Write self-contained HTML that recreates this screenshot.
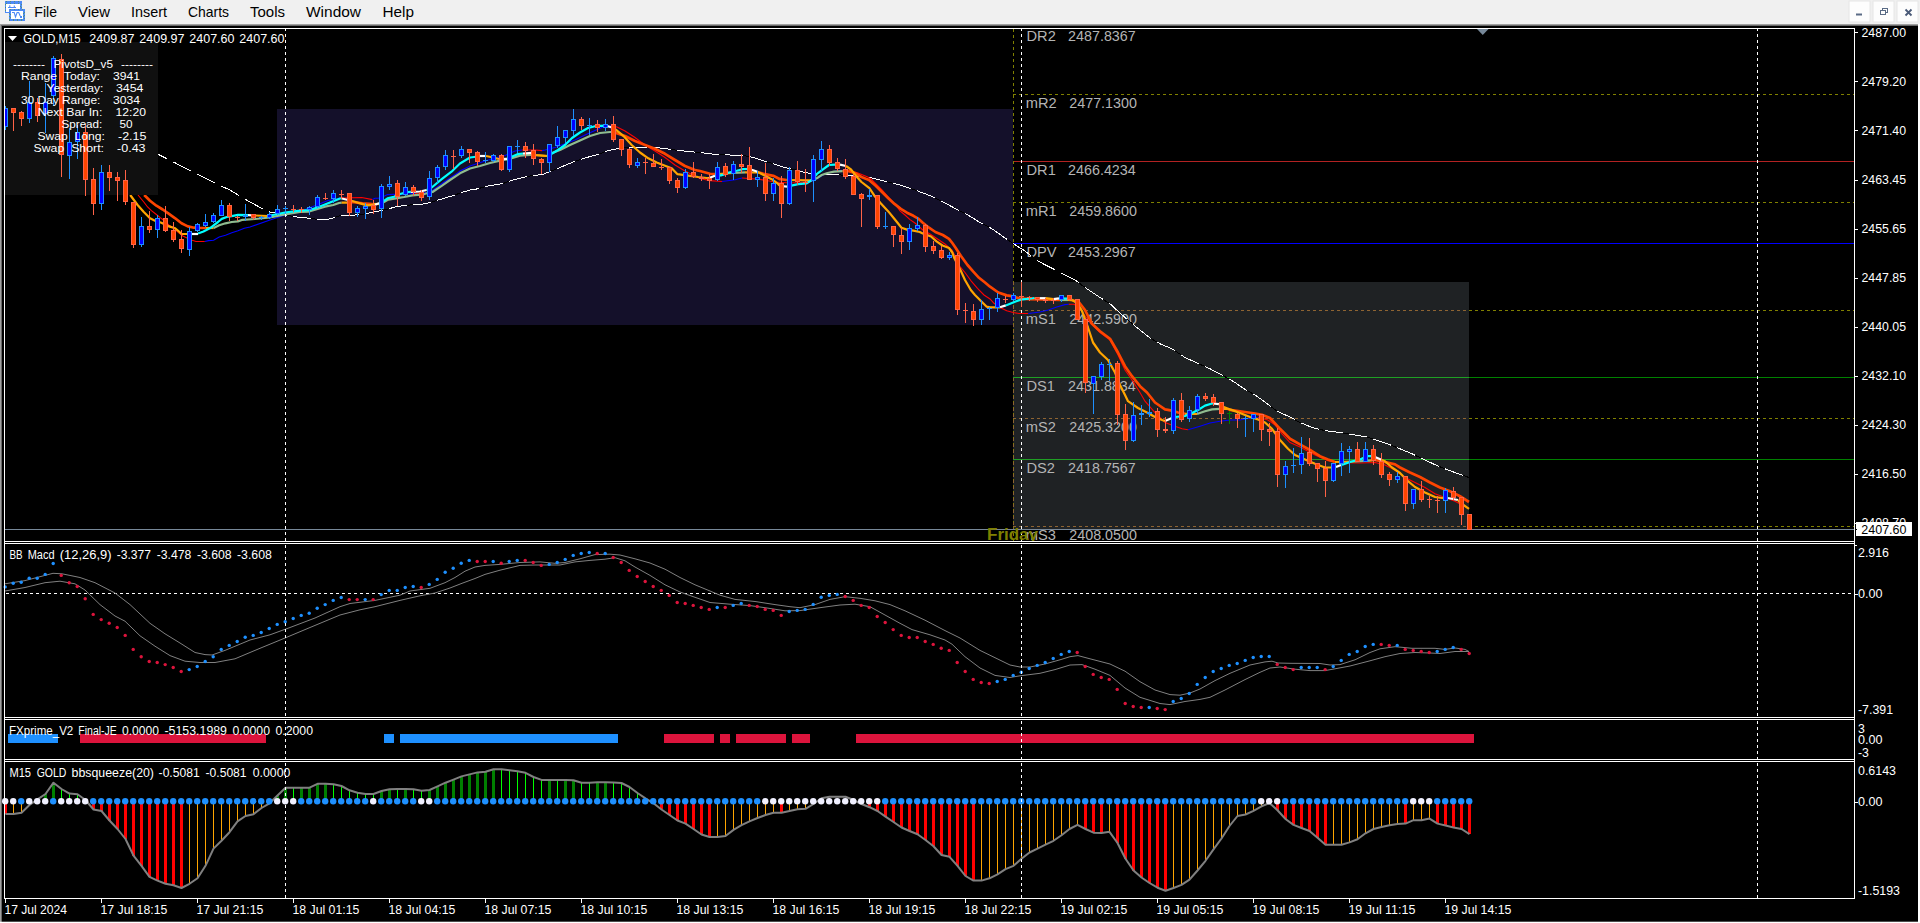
<!DOCTYPE html><html><head><meta charset="utf-8"><title>GOLD,M15</title><style>html,body{margin:0;padding:0;background:#000;overflow:hidden}svg{display:block}text{white-space:pre}</style></head><body><svg width="1920" height="923" viewBox="0 0 1920 923" font-family='"Liberation Sans", sans-serif'>
<defs><clipPath id="cmain"><rect x="5" y="29" width="1849" height="512"/></clipPath><clipPath id="cgrey"><rect x="1013" y="282" width="456" height="248"/></clipPath></defs>
<rect x="0" y="0" width="1920" height="923" fill="#000" />
<rect x="0" y="0" width="1920" height="24" fill="#f0f0f0" />
<g shape-rendering="crispEdges">
<rect x="0" y="24" width="1920" height="1" fill="#a0a0a0" />
<rect x="1" y="25" width="1919" height="1" fill="#696969" />
<rect x="0" y="24" width="1" height="899" fill="#a0a0a0" />
<rect x="1" y="25" width="1" height="898" fill="#696969" />
<rect x="1918" y="24" width="2" height="899" fill="#fff" />
<rect x="0" y="922" width="1920" height="1" fill="#fff" />
</g>
<rect x="0" y="921.7" width="1920" height="0.3" fill="#fff" />
<g shape-rendering="crispEdges"><rect x="5" y="1" width="17" height="12" fill="#4d8af7"/><rect x="6" y="4" width="14" height="8" fill="#fff"/><rect x="9" y="9" width="16" height="12" fill="#4d8af7"/><rect x="11" y="11" width="12" height="8" fill="#fff"/><path d="M6 1.5h16M6 3.5h16M10 9.5h15M9 19.5h16M9 20.5h16" stroke="#4f907f" stroke-width="1" stroke-dasharray="1 3" fill="none"/><path d="M5.5 2v11M20.5 4v5M21.5 2v7M9.5 11v10M10.5 12v7M23.5 11v8M24.5 10v10" stroke="#4f907f" stroke-width="1" stroke-dasharray="1 2" stroke-dashoffset="1" fill="none"/><rect x="20" y="16" width="2" height="2" fill="#4d8af7"/></g><path d="M8 7.5h8M9.8 5.2v2.5M14.3 5.5v2" stroke="#4d8af7" stroke-width="1.1" fill="none"/><path d="M12 12.5h2.2l1.3 4.5 1.6-4.5h1.6l1.5 3.5" stroke="#4d8af7" stroke-width="1.1" fill="none"/>
<text x="34.3" y="17" font-size="15" fill="#000" textLength="22.7" lengthAdjust="spacingAndGlyphs"  xml:space="preserve">File</text>
<text x="78" y="17" font-size="15" fill="#000" textLength="32" lengthAdjust="spacingAndGlyphs"  xml:space="preserve">View</text>
<text x="131" y="17" font-size="15" fill="#000" textLength="36" lengthAdjust="spacingAndGlyphs"  xml:space="preserve">Insert</text>
<text x="188" y="17" font-size="15" fill="#000" textLength="41" lengthAdjust="spacingAndGlyphs"  xml:space="preserve">Charts</text>
<text x="250" y="17" font-size="15" fill="#000" textLength="35" lengthAdjust="spacingAndGlyphs"  xml:space="preserve">Tools</text>
<text x="306" y="17" font-size="15" fill="#000" textLength="55" lengthAdjust="spacingAndGlyphs"  xml:space="preserve">Window</text>
<text x="382.5" y="17" font-size="15" fill="#000" textLength="31.5" lengthAdjust="spacingAndGlyphs"  xml:space="preserve">Help</text>
<rect x="1849" y="1" width="21" height="21" fill="#fdfdfd" stroke="#e6e6e6" stroke-width="1"/>
<rect x="1873" y="1" width="21" height="21" fill="#fdfdfd" stroke="#e6e6e6" stroke-width="1"/>
<rect x="1897" y="1" width="21" height="21" fill="#fdfdfd" stroke="#e6e6e6" stroke-width="1"/>
<rect x="1856" y="13.5" width="6" height="2" fill="#5a6b85" />
<path d="M1880.5 10.5h5v4h-5z M1882.5 10.5v-2h5v4h-2" stroke="#5a6b85" stroke-width="1.2" fill="none" shape-rendering="crispEdges"/>
<path d="M1905.5 9.5l6 6m0-6l-6 6" stroke="#4a5a78" stroke-width="1.8" fill="none"/>
<g clip-path="url(#cmain)">
<rect x="277" y="109" width="736" height="216" fill="#14102a" />
<rect x="1013" y="282" width="456" height="247.5" fill="#1f2224" />
<line x1="1013" x2="1854" y1="94.5" y2="94.5" stroke="#808000" stroke-width="1" stroke-dasharray="3 3" shape-rendering="crispEdges"/>
<line x1="1013" x2="1854" y1="161.5" y2="161.5" stroke="#b22222" stroke-width="1" shape-rendering="crispEdges"/>
<line x1="1013" x2="1854" y1="202.5" y2="202.5" stroke="#808000" stroke-width="1" stroke-dasharray="3 3" shape-rendering="crispEdges"/>
<line x1="1013" x2="1854" y1="243.5" y2="243.5" stroke="#0000ff" stroke-width="1" shape-rendering="crispEdges"/>
<line x1="1013" x2="1854" y1="310.5" y2="310.5" stroke="#808000" stroke-width="1" stroke-dasharray="3 3" shape-rendering="crispEdges"/>
<line x1="1013" x2="1854" y1="377.5" y2="377.5" stroke="#008000" stroke-width="1" shape-rendering="crispEdges"/>
<line x1="1013" x2="1854" y1="418.5" y2="418.5" stroke="#808000" stroke-width="1" stroke-dasharray="3 3" shape-rendering="crispEdges"/>
<line x1="1013" x2="1854" y1="459.5" y2="459.5" stroke="#008000" stroke-width="1" shape-rendering="crispEdges"/>
<line x1="1013" x2="1854" y1="526.5" y2="526.5" stroke="#808000" stroke-width="1" stroke-dasharray="3 3" shape-rendering="crispEdges"/>
<line x1="1013.5" x2="1013.5" y1="29" y2="541" stroke="#808000" stroke-width="1" stroke-dasharray="3 3" shape-rendering="crispEdges"/>
<g clip-path="url(#cgrey)">
<line x1="1013" x2="1469" y1="310.5" y2="310.5" stroke="#8e6432" stroke-width="1" stroke-dasharray="3 3" shape-rendering="crispEdges"/>
<line x1="1013" x2="1469" y1="377.5" y2="377.5" stroke="#1fa024" stroke-width="1" shape-rendering="crispEdges"/>
<line x1="1013" x2="1469" y1="418.5" y2="418.5" stroke="#8e6432" stroke-width="1" stroke-dasharray="3 3" shape-rendering="crispEdges"/>
<line x1="1013" x2="1469" y1="459.5" y2="459.5" stroke="#1fa024" stroke-width="1" shape-rendering="crispEdges"/>
<line x1="1013" x2="1469" y1="526.5" y2="526.5" stroke="#8e6432" stroke-width="1" stroke-dasharray="3 3" shape-rendering="crispEdges"/>
<line x1="1013.5" x2="1013.5" y1="282" y2="530" stroke="#8e6432" stroke-width="1" stroke-dasharray="3 3" shape-rendering="crispEdges"/>
</g>
<line x1="5" x2="1854" y1="529.5" y2="529.5" stroke="#778899" stroke-width="1" shape-rendering="crispEdges"/>
<text x="1026.5" y="40.8" font-size="14.67" fill="#b4b4b4"  xml:space="preserve">DR2</text>
<text x="1068.1" y="40.8" font-size="14.67" fill="#b4b4b4" textLength="67.6" lengthAdjust="spacingAndGlyphs"  xml:space="preserve">2487.8367</text>
<text x="1025.7" y="108" font-size="14.67" fill="#b4b4b4"  xml:space="preserve">mR2</text>
<text x="1069.3" y="108" font-size="14.67" fill="#b4b4b4" textLength="67.6" lengthAdjust="spacingAndGlyphs"  xml:space="preserve">2477.1300</text>
<text x="1026.5" y="175" font-size="14.67" fill="#b4b4b4"  xml:space="preserve">DR1</text>
<text x="1068.1" y="175" font-size="14.67" fill="#b4b4b4" textLength="67.6" lengthAdjust="spacingAndGlyphs"  xml:space="preserve">2466.4234</text>
<text x="1025.7" y="216" font-size="14.67" fill="#b4b4b4"  xml:space="preserve">mR1</text>
<text x="1069.3" y="216" font-size="14.67" fill="#b4b4b4" textLength="67.6" lengthAdjust="spacingAndGlyphs"  xml:space="preserve">2459.8600</text>
<text x="1026.5" y="257" font-size="14.67" fill="#b4b4b4"  xml:space="preserve">DPV</text>
<text x="1068.1" y="257" font-size="14.67" fill="#b4b4b4" textLength="67.6" lengthAdjust="spacingAndGlyphs"  xml:space="preserve">2453.2967</text>
<text x="1025.7" y="324" font-size="14.67" fill="#b4b4b4"  xml:space="preserve">mS1</text>
<text x="1069.3" y="324" font-size="14.67" fill="#b4b4b4" textLength="67.6" lengthAdjust="spacingAndGlyphs"  xml:space="preserve">2442.5900</text>
<text x="1026.5" y="391" font-size="14.67" fill="#b4b4b4"  xml:space="preserve">DS1</text>
<text x="1068.1" y="391" font-size="14.67" fill="#b4b4b4" textLength="67.6" lengthAdjust="spacingAndGlyphs"  xml:space="preserve">2431.8834</text>
<text x="1025.7" y="432" font-size="14.67" fill="#b4b4b4"  xml:space="preserve">mS2</text>
<text x="1069.3" y="432" font-size="14.67" fill="#b4b4b4" textLength="67.6" lengthAdjust="spacingAndGlyphs"  xml:space="preserve">2425.3200</text>
<text x="1026.5" y="473" font-size="14.67" fill="#b4b4b4"  xml:space="preserve">DS2</text>
<text x="1068.1" y="473" font-size="14.67" fill="#b4b4b4" textLength="67.6" lengthAdjust="spacingAndGlyphs"  xml:space="preserve">2418.7567</text>
<text x="1025.7" y="540" font-size="14.67" fill="#b4b4b4"  xml:space="preserve">mS3</text>
<text x="1069.3" y="540" font-size="14.67" fill="#b4b4b4" textLength="67.6" lengthAdjust="spacingAndGlyphs"  xml:space="preserve">2408.0500</text>
<polyline points="157.0,153.8 175.0,162.8 200.0,175.4 220.0,185.5 230.0,190.0 238.0,195.0 250.0,202.0 262.0,208.5 270.0,212.0 285.0,215.0 300.0,217.5 311.0,218.3 317.0,219.4 327.0,219.4 335.0,217.5 341.0,215.4 352.5,215.4 358.0,214.6 366.0,213.8 373.0,212.0 382.5,210.4 389.0,208.8 397.5,206.2 407.0,205.7 413.0,204.3 422.5,204.2 431.0,202.5 437.0,200.4 455.0,195.0 460.0,193.0 470.0,190.0 475.0,189.4 490.0,185.6 503.0,183.5 515.0,179.4 530.0,176.0 543.0,174.4 550.0,171.5 560.0,167.5 572.0,162.5 585.0,158.0 598.0,154.4 608.0,150.6 618.0,148.5 630.0,147.5 645.0,147.2 660.0,148.0 675.0,150.0 688.0,151.5 700.0,152.5 715.0,154.4 730.0,155.0 742.0,155.0 755.0,158.0 765.0,161.2 775.0,164.4 785.0,167.5 795.0,169.8 805.0,172.5 815.0,174.0 830.0,174.4 838.0,174.8 850.0,175.6 860.0,177.0 872.0,178.0 885.0,181.2 900.0,185.0 915.0,190.0 930.0,195.6 945.0,203.0 960.0,211.0 968.0,215.0 980.0,222.5 992.0,228.8 1005.0,238.0 1013.0,243.5 1025.0,251.0 1037.0,260.6 1053.0,268.8 1062.0,273.5 1075.0,280.0 1085.0,287.5 1100.0,297.5 1110.0,303.8 1125.0,317.5 1135.0,326.0 1150.0,338.0 1160.0,343.8 1172.0,348.8 1185.0,357.5 1197.0,363.0 1210.0,368.8 1222.0,375.0 1235.0,382.5 1245.0,389.4 1255.0,395.0 1265.0,402.0 1277.0,411.2 1290.0,417.0 1300.0,422.5 1312.0,427.5 1325.0,430.6 1340.0,432.5 1355.0,435.0 1367.0,437.0 1378.0,440.6 1390.0,444.8 1400.0,448.8 1412.0,453.8 1425.0,460.0 1437.0,465.6 1448.0,470.0 1460.0,474.4 1469.0,477.5" fill="none" stroke="#000" stroke-width="1.0" shape-rendering="crispEdges"/>
<polyline points="157.0,153.8 166.8,158.7" fill="none" stroke="#fff" stroke-width="1.0" shape-rendering="crispEdges"/>
<polyline points="173.3,161.9 175.0,162.8 190.8,170.8" fill="none" stroke="#fff" stroke-width="1.0" shape-rendering="crispEdges"/>
<polyline points="197.3,174.0 200.0,175.4 214.8,182.9" fill="none" stroke="#fff" stroke-width="1.0" shape-rendering="crispEdges"/>
<polyline points="221.3,186.1 230.0,190.0 238.0,195.0 238.8,195.5" fill="none" stroke="#fff" stroke-width="1.0" shape-rendering="crispEdges"/>
<polyline points="245.3,199.3 250.0,202.0 262.0,208.5 262.8,208.8" fill="none" stroke="#fff" stroke-width="1.0" shape-rendering="crispEdges"/>
<polyline points="269.3,211.7 270.0,212.0 285.0,215.0 286.8,215.3" fill="none" stroke="#fff" stroke-width="1.0" shape-rendering="crispEdges"/>
<polyline points="293.3,216.4 300.0,217.5 310.8,218.3" fill="none" stroke="#fff" stroke-width="1.0" shape-rendering="crispEdges"/>
<polyline points="317.3,219.4 327.0,219.4 334.8,217.5" fill="none" stroke="#fff" stroke-width="1.0" shape-rendering="crispEdges"/>
<polyline points="341.3,215.4 352.5,215.4 358.0,214.6 358.8,214.5" fill="none" stroke="#fff" stroke-width="1.0" shape-rendering="crispEdges"/>
<polyline points="365.3,213.8 366.0,213.8 373.0,212.0 382.5,210.4 382.8,210.3" fill="none" stroke="#fff" stroke-width="1.0" shape-rendering="crispEdges"/>
<polyline points="389.3,208.7 397.5,206.2 406.8,205.7" fill="none" stroke="#fff" stroke-width="1.0" shape-rendering="crispEdges"/>
<polyline points="413.3,204.3 422.5,204.2 430.8,202.5" fill="none" stroke="#fff" stroke-width="1.0" shape-rendering="crispEdges"/>
<polyline points="437.3,200.3 454.8,195.1" fill="none" stroke="#fff" stroke-width="1.0" shape-rendering="crispEdges"/>
<polyline points="461.3,192.6 470.0,190.0 475.0,189.4 478.8,188.4" fill="none" stroke="#fff" stroke-width="1.0" shape-rendering="crispEdges"/>
<polyline points="485.3,186.8 490.0,185.6 502.8,183.5" fill="none" stroke="#fff" stroke-width="1.0" shape-rendering="crispEdges"/>
<polyline points="509.3,181.3 515.0,179.4 526.8,176.7" fill="none" stroke="#fff" stroke-width="1.0" shape-rendering="crispEdges"/>
<polyline points="533.3,175.6 543.0,174.4 550.0,171.5 550.8,171.2" fill="none" stroke="#fff" stroke-width="1.0" shape-rendering="crispEdges"/>
<polyline points="557.3,168.6 560.0,167.5 572.0,162.5 574.8,161.5" fill="none" stroke="#fff" stroke-width="1.0" shape-rendering="crispEdges"/>
<polyline points="581.3,159.3 585.0,158.0 598.0,154.4 598.8,154.1" fill="none" stroke="#fff" stroke-width="1.0" shape-rendering="crispEdges"/>
<polyline points="605.3,151.6 608.0,150.6 618.0,148.5 622.8,148.1" fill="none" stroke="#fff" stroke-width="1.0" shape-rendering="crispEdges"/>
<polyline points="629.3,147.6 630.0,147.5 645.0,147.2 646.8,147.3" fill="none" stroke="#fff" stroke-width="1.0" shape-rendering="crispEdges"/>
<polyline points="653.3,147.7 660.0,148.0 670.8,149.4" fill="none" stroke="#fff" stroke-width="1.0" shape-rendering="crispEdges"/>
<polyline points="677.3,150.3 688.0,151.5 694.8,152.1" fill="none" stroke="#fff" stroke-width="1.0" shape-rendering="crispEdges"/>
<polyline points="701.3,152.7 715.0,154.4 718.8,154.6" fill="none" stroke="#fff" stroke-width="1.0" shape-rendering="crispEdges"/>
<polyline points="725.3,154.8 730.0,155.0 742.0,155.0 742.8,155.2" fill="none" stroke="#fff" stroke-width="1.0" shape-rendering="crispEdges"/>
<polyline points="749.3,156.7 755.0,158.0 765.0,161.2 766.8,161.8" fill="none" stroke="#fff" stroke-width="1.0" shape-rendering="crispEdges"/>
<polyline points="773.3,163.9 775.0,164.4 785.0,167.5 790.8,168.8" fill="none" stroke="#fff" stroke-width="1.0" shape-rendering="crispEdges"/>
<polyline points="797.3,170.4 805.0,172.5 814.8,174.0" fill="none" stroke="#fff" stroke-width="1.0" shape-rendering="crispEdges"/>
<polyline points="821.3,174.2 830.0,174.4 838.0,174.8 838.8,174.8" fill="none" stroke="#fff" stroke-width="1.0" shape-rendering="crispEdges"/>
<polyline points="845.3,175.3 850.0,175.6 860.0,177.0 862.8,177.2" fill="none" stroke="#fff" stroke-width="1.0" shape-rendering="crispEdges"/>
<polyline points="869.3,177.8 872.0,178.0 885.0,181.2 886.8,181.7" fill="none" stroke="#fff" stroke-width="1.0" shape-rendering="crispEdges"/>
<polyline points="893.3,183.3 900.0,185.0 910.8,188.6" fill="none" stroke="#fff" stroke-width="1.0" shape-rendering="crispEdges"/>
<polyline points="917.3,190.9 930.0,195.6 934.8,198.0" fill="none" stroke="#fff" stroke-width="1.0" shape-rendering="crispEdges"/>
<polyline points="941.3,201.2 945.0,203.0 958.8,210.4" fill="none" stroke="#fff" stroke-width="1.0" shape-rendering="crispEdges"/>
<polyline points="965.3,213.6 968.0,215.0 980.0,222.5 982.8,224.0" fill="none" stroke="#fff" stroke-width="1.0" shape-rendering="crispEdges"/>
<polyline points="989.3,227.3 992.0,228.8 1005.0,238.0 1006.8,239.2" fill="none" stroke="#fff" stroke-width="1.0" shape-rendering="crispEdges"/>
<polyline points="1013.3,243.7 1025.0,251.0 1030.8,255.6" fill="none" stroke="#fff" stroke-width="1.0" shape-rendering="crispEdges"/>
<polyline points="1037.3,260.8 1053.0,268.8 1054.8,269.7" fill="none" stroke="#fff" stroke-width="1.0" shape-rendering="crispEdges"/>
<polyline points="1061.3,273.1 1062.0,273.5 1075.0,280.0 1078.8,282.8" fill="none" stroke="#fff" stroke-width="1.0" shape-rendering="crispEdges"/>
<polyline points="1085.3,287.7 1100.0,297.5 1102.8,299.2" fill="none" stroke="#fff" stroke-width="1.0" shape-rendering="crispEdges"/>
<polyline points="1109.3,303.3 1110.0,303.8 1125.0,317.5 1126.8,319.0" fill="none" stroke="#fff" stroke-width="1.0" shape-rendering="crispEdges"/>
<polyline points="1133.3,324.6 1135.0,326.0 1150.0,338.0 1150.8,338.5" fill="none" stroke="#fff" stroke-width="1.0" shape-rendering="crispEdges"/>
<polyline points="1157.3,342.2 1160.0,343.8 1172.0,348.8 1174.8,350.6" fill="none" stroke="#fff" stroke-width="1.0" shape-rendering="crispEdges"/>
<polyline points="1181.3,355.0 1185.0,357.5 1197.0,363.0 1198.8,363.8" fill="none" stroke="#fff" stroke-width="1.0" shape-rendering="crispEdges"/>
<polyline points="1205.3,366.7 1210.0,368.8 1222.0,375.0 1222.8,375.5" fill="none" stroke="#fff" stroke-width="1.0" shape-rendering="crispEdges"/>
<polyline points="1229.3,379.2 1235.0,382.5 1245.0,389.4 1246.8,390.4" fill="none" stroke="#fff" stroke-width="1.0" shape-rendering="crispEdges"/>
<polyline points="1253.3,394.0 1255.0,395.0 1265.0,402.0 1270.8,406.5" fill="none" stroke="#fff" stroke-width="1.0" shape-rendering="crispEdges"/>
<polyline points="1277.3,411.4 1290.0,417.0 1294.8,419.6" fill="none" stroke="#fff" stroke-width="1.0" shape-rendering="crispEdges"/>
<polyline points="1301.3,423.0 1312.0,427.5 1318.8,429.1" fill="none" stroke="#fff" stroke-width="1.0" shape-rendering="crispEdges"/>
<polyline points="1325.3,430.6 1340.0,432.5 1342.8,433.0" fill="none" stroke="#fff" stroke-width="1.0" shape-rendering="crispEdges"/>
<polyline points="1349.3,434.1 1355.0,435.0 1366.8,437.0" fill="none" stroke="#fff" stroke-width="1.0" shape-rendering="crispEdges"/>
<polyline points="1373.3,439.1 1378.0,440.6 1390.0,444.8 1390.8,445.1" fill="none" stroke="#fff" stroke-width="1.0" shape-rendering="crispEdges"/>
<polyline points="1397.3,447.7 1400.0,448.8 1412.0,453.8 1414.8,455.1" fill="none" stroke="#fff" stroke-width="1.0" shape-rendering="crispEdges"/>
<polyline points="1421.3,458.2 1425.0,460.0 1437.0,465.6 1438.8,466.3" fill="none" stroke="#fff" stroke-width="1.0" shape-rendering="crispEdges"/>
<polyline points="1445.3,468.9 1448.0,470.0 1460.0,474.4 1462.8,475.4" fill="none" stroke="#fff" stroke-width="1.0" shape-rendering="crispEdges"/>
<polyline points="138.0,195.0 143.8,202.0 147.6,207.0 151.4,210.7 156.4,214.5 160.2,217.6 162.7,219.5 169.0,225.2 174.0,228.3 178.4,232.7 182.8,235.9 186.6,237.7 192.2,240.2 196.0,241.5 204.8,241.5" fill="none" stroke="#FF0000" stroke-width="1.1" />
<polyline points="204.8,241.5 208.5,240.6 213.6,240.2 219.2,237.0 225.5,235.2 231.8,232.7 238.0,230.8 244.3,228.3 250.0,227.0 270.0,220.0 285.0,215.0 304.0,210.0 316.7,205.0 327.5,200.8 340.0,198.0" fill="none" stroke="#0000FF" stroke-width="1.1" />
<polyline points="340.0,198.0 361.7,197.5 372.5,199.6" fill="none" stroke="#FF0000" stroke-width="1.1" />
<polyline points="372.5,199.6 375.0,198.3 378.3,198.3 384.0,196.2 387.5,194.6 394.0,194.3 400.0,194.6 407.5,193.8 415.0,193.5" fill="none" stroke="#0000FF" stroke-width="1.1" />
<polyline points="415.0,193.5 419.0,193.3" fill="none" stroke="#FF0000" stroke-width="1.1" />
<polyline points="419.0,193.3 426.7,192.5 432.5,190.4 441.7,183.8 450.0,178.0 458.3,172.5 460.0,171.0 470.0,166.0 485.0,161.0 495.0,158.0 505.0,155.6 515.0,151.0 522.0,150.0" fill="none" stroke="#0000FF" stroke-width="1.1" />
<polyline points="522.0,150.0 535.0,150.0 542.0,150.6" fill="none" stroke="#FF0000" stroke-width="1.1" />
<polyline points="542.0,150.6 545.0,150.0 555.0,147.5 565.0,143.8 575.0,140.0 585.0,135.0 595.0,130.6 605.0,126.0 612.0,126.0" fill="none" stroke="#0000FF" stroke-width="1.1" />
<polyline points="612.0,126.0 617.0,127.0 625.0,131.0 635.0,137.5 645.0,145.0 655.0,151.0 665.0,157.5 675.0,165.0 685.0,171.0 695.0,176.0 700.0,178.5 710.0,180.6 722.0,181.5" fill="none" stroke="#FF0000" stroke-width="1.1" />
<polyline points="722.0,181.5 735.0,179.8 742.0,178.0" fill="none" stroke="#0000FF" stroke-width="1.1" />
<polyline points="742.0,178.0 760.0,179.4 775.0,182.0 790.0,183.0 800.0,182.5 812.0,181.2" fill="none" stroke="#FF0000" stroke-width="1.1" />
<polyline points="812.0,181.2 815.0,180.0 825.0,173.8 835.0,171.2 845.0,170.0" fill="none" stroke="#0000FF" stroke-width="1.1" />
<polyline points="845.0,170.0 848.0,170.0 858.0,173.0 867.7,177.0 871.5,179.5 876.0,184.0 882.0,190.0 888.0,196.5 895.8,205.0 900.0,210.8 905.0,215.0 910.0,219.6 915.3,223.3 920.3,227.7 922.8,230.0 930.0,234.0 945.0,244.0 952.0,250.0 956.0,258.0 960.0,266.7 965.0,272.5 971.7,281.7 977.5,288.3 984.0,295.0 990.0,299.0 994.0,303.3 1000.0,307.5 1006.7,310.8 1013.3,312.5 1019.0,313.5 1028.3,313.5" fill="none" stroke="#FF0000" stroke-width="1.1" />
<polyline points="1028.3,313.5 1040.0,312.0 1048.3,310.0 1056.7,307.0 1065.0,304.6 1068.8,304.2" fill="none" stroke="#0000FF" stroke-width="1.1" />
<polyline points="1068.8,304.2 1074.0,304.3 1076.0,305.5 1080.0,308.8 1090.0,322.5 1100.0,332.5 1110.0,340.0 1118.0,355.0 1125.0,370.0 1132.0,380.0 1140.0,392.5 1145.0,401.2 1155.0,412.5 1165.0,422.5 1175.0,426.2 1182.0,428.8 1188.0,429.8" fill="none" stroke="#FF0000" stroke-width="1.1" />
<polyline points="1188.0,429.8 1200.0,426.2 1210.0,423.0 1220.0,421.2 1230.0,420.0 1240.0,420.0 1250.0,418.0 1258.0,417.2" fill="none" stroke="#0000FF" stroke-width="1.1" />
<polyline points="1258.0,417.2 1268.0,420.0 1275.0,425.0 1282.0,433.8 1290.0,442.5 1300.0,447.0 1315.0,455.0 1328.0,460.6 1340.0,462.8 1360.0,463.0 1375.0,462.5 1385.0,465.0 1395.0,470.0 1405.0,477.5 1415.0,482.5 1425.0,487.5 1435.0,493.8 1445.0,497.5 1455.0,501.2 1462.0,505.0 1469.0,508.8" fill="none" stroke="#FF0000" stroke-width="1.1" />
<polyline points="144.2,195.0 150.0,200.7 156.4,205.7 162.7,209.5 169.0,213.9 175.2,218.3 181.5,223.3 187.8,226.4 194.0,227.7 200.4,228.0 206.0,228.0" fill="none" stroke="#FF4500" stroke-width="2.7" stroke-linejoin="round"/>
<polyline points="206.0,228.0 213.6,228.0" fill="none" stroke="#FFA500" stroke-width="2.2" stroke-linejoin="round"/>
<polyline points="213.6,228.0 219.2,225.2 225.5,223.3 231.8,222.0 238.0,221.4 242.5,219.8 255.0,219.0 270.0,217.5 285.0,214.4 300.0,212.0 308.3,211.7 316.7,209.2 325.0,206.7 333.3,205.0 339.0,203.0 341.7,202.7" fill="none" stroke="#8FBC8F" stroke-width="2.2" stroke-linejoin="round"/>
<polyline points="341.7,202.7 348.0,202.6" fill="none" stroke="#FFA500" stroke-width="2.2" stroke-linejoin="round"/>
<polyline points="348.0,202.6 352.5,202.0 362.5,203.3 372.5,204.2" fill="none" stroke="#FF4500" stroke-width="2.7" stroke-linejoin="round"/>
<polyline points="372.5,204.2 380.0,203.8" fill="none" stroke="#FFA500" stroke-width="2.2" stroke-linejoin="round"/>
<polyline points="380.0,203.8 384.0,202.0 388.3,199.6 395.8,198.3 404.0,197.0 412.5,195.4 420.8,194.6 425.0,193.8 432.5,192.0 441.7,185.8 450.0,180.0 460.0,173.3 470.0,168.5 480.0,166.0 490.0,163.0 500.0,160.6 510.0,158.8 520.0,155.6 530.0,154.8 533.0,155.0" fill="none" stroke="#8FBC8F" stroke-width="2.2" stroke-linejoin="round"/>
<polyline points="533.0,155.0 548.0,156.0" fill="none" stroke="#FFA500" stroke-width="2.2" stroke-linejoin="round"/>
<polyline points="548.0,156.0 550.0,153.8 560.0,150.0 570.0,145.0 580.0,140.6 590.0,136.0 600.0,133.0 610.0,132.0 613.0,132.0" fill="none" stroke="#8FBC8F" stroke-width="2.2" stroke-linejoin="round"/>
<polyline points="613.0,132.0 625.0,136.0 635.0,141.0 645.0,145.0 655.0,148.8 665.0,153.8 675.0,160.0 685.0,166.0 695.0,170.0 700.0,171.0 710.0,173.8 718.0,174.0" fill="none" stroke="#FF4500" stroke-width="2.7" stroke-linejoin="round"/>
<polyline points="718.0,174.0 733.0,173.0" fill="none" stroke="#FFA500" stroke-width="2.2" stroke-linejoin="round"/>
<polyline points="733.0,173.0 745.0,172.3" fill="none" stroke="#8FBC8F" stroke-width="2.2" stroke-linejoin="round"/>
<polyline points="745.0,172.3 759.0,172.5" fill="none" stroke="#FFA500" stroke-width="2.2" stroke-linejoin="round"/>
<polyline points="759.0,172.5 765.0,174.2 773.3,175.8 780.0,179.2 786.7,180.0" fill="none" stroke="#FF4500" stroke-width="2.7" stroke-linejoin="round"/>
<polyline points="786.7,180.0 811.0,180.4" fill="none" stroke="#FFA500" stroke-width="2.2" stroke-linejoin="round"/>
<polyline points="811.0,180.4 816.7,178.3 821.7,175.0 827.5,173.0 834.0,171.7 842.5,171.2" fill="none" stroke="#8FBC8F" stroke-width="2.2" stroke-linejoin="round"/>
<polyline points="842.5,171.2 848.0,171.0" fill="none" stroke="#FFA500" stroke-width="2.2" stroke-linejoin="round"/>
<polyline points="848.0,171.0 855.0,173.0 861.4,177.0 869.0,180.0 875.7,185.7 882.0,192.0 888.3,198.2 894.5,203.9 900.8,208.9 907.0,212.7 913.4,215.8 917.8,218.3 922.8,222.7 929.0,227.7 935.4,232.0 942.8,235.0 949.0,238.8 952.3,243.0 955.4,247.5 960.8,255.8 967.5,265.0 973.3,271.7 979.0,277.8 985.0,282.5 990.0,286.7 998.3,292.5 1006.7,295.4 1011.7,296.2 1019.0,298.3 1030.0,299.2 1052.0,299.6 1060.0,300.0" fill="none" stroke="#FF4500" stroke-width="2.7" stroke-linejoin="round"/>
<polyline points="1060.0,300.0 1068.0,300.0" fill="none" stroke="#8FBC8F" stroke-width="2.2" stroke-linejoin="round"/>
<polyline points="1068.0,300.0 1074.0,300.5" fill="none" stroke="#FFA500" stroke-width="2.2" stroke-linejoin="round"/>
<polyline points="1074.0,300.5 1078.0,301.0 1085.0,310.0 1092.0,323.8 1100.0,331.2 1110.0,338.8 1118.0,352.5 1125.0,366.2 1132.0,376.2 1140.0,386.2 1147.0,392.5 1155.0,402.5 1165.0,409.4 1172.0,410.6 1178.0,412.5 1185.0,413.8" fill="none" stroke="#FF4500" stroke-width="2.7" stroke-linejoin="round"/>
<polyline points="1185.0,413.8 1197.0,414.0" fill="none" stroke="#FFA500" stroke-width="2.2" stroke-linejoin="round"/>
<polyline points="1197.0,414.0 1205.0,411.2 1212.0,409.4 1220.0,408.8" fill="none" stroke="#8FBC8F" stroke-width="2.2" stroke-linejoin="round"/>
<polyline points="1220.0,408.8 1228.0,409.0" fill="none" stroke="#FFA500" stroke-width="2.2" stroke-linejoin="round"/>
<polyline points="1228.0,409.0 1230.0,409.8 1245.0,412.0 1255.0,413.5 1262.0,414.8 1270.0,418.0 1280.0,428.8 1290.0,438.8 1300.0,444.4 1310.0,450.0 1320.0,456.2 1328.0,459.4 1335.0,462.0" fill="none" stroke="#FF4500" stroke-width="2.7" stroke-linejoin="round"/>
<polyline points="1335.0,462.0 1355.0,461.5" fill="none" stroke="#FFA500" stroke-width="2.2" stroke-linejoin="round"/>
<polyline points="1355.0,461.5 1370.0,460.6" fill="none" stroke="#8FBC8F" stroke-width="2.2" stroke-linejoin="round"/>
<polyline points="1370.0,460.6 1375.0,460.0" fill="none" stroke="#FFA500" stroke-width="2.2" stroke-linejoin="round"/>
<polyline points="1375.0,460.0 1385.0,462.0 1395.0,464.4 1400.0,467.5 1410.0,472.5 1420.0,477.0 1430.0,482.5 1440.0,487.5 1450.0,491.2 1460.0,496.2 1469.0,502.0" fill="none" stroke="#FF4500" stroke-width="2.7" stroke-linejoin="round"/>
<polyline points="130.2,195.0 137.6,205.0 143.8,212.0 150.0,218.3 155.0,220.8 161.4,222.7 169.0,226.4 175.2,228.3 179.0,231.5 181.5,234.0 192.0,234.0" fill="none" stroke="#FFA500" stroke-width="2.2" stroke-linejoin="round"/>
<polyline points="192.0,234.0 198.0,234.0" fill="none" stroke="#FFFFFF" stroke-width="2.2" stroke-linejoin="round"/>
<polyline points="198.0,233.5 203.5,231.5 209.8,228.3 213.0,225.8 218.0,222.0 221.7,218.9 226.8,217.0 233.0,215.8 238.0,214.8 248.0,215.2" fill="none" stroke="#00FFFF" stroke-width="2.2" stroke-linejoin="round"/>
<polyline points="248.0,215.2 255.0,215.5" fill="none" stroke="#FFFFFF" stroke-width="2.2" stroke-linejoin="round"/>
<polyline points="255.0,215.5 268.0,216.0" fill="none" stroke="#FFA500" stroke-width="2.2" stroke-linejoin="round"/>
<polyline points="268.0,216.0 285.0,212.5 300.0,210.6 310.0,210.0 320.0,206.5 330.0,202.5 340.0,198.5 342.0,198.5" fill="none" stroke="#00FFFF" stroke-width="2.2" stroke-linejoin="round"/>
<polyline points="342.0,198.5 348.0,200.0" fill="none" stroke="#FFFFFF" stroke-width="2.2" stroke-linejoin="round"/>
<polyline points="348.0,200.0 353.3,201.2 366.7,205.4 375.0,204.8" fill="none" stroke="#FFA500" stroke-width="2.2" stroke-linejoin="round"/>
<polyline points="375.0,204.8 379.0,203.3 382.0,201.8" fill="none" stroke="#FFFFFF" stroke-width="2.2" stroke-linejoin="round"/>
<polyline points="382.0,201.8 384.0,200.8 387.5,198.3 394.0,196.7 400.0,194.0 407.5,192.0 410.8,191.8" fill="none" stroke="#00FFFF" stroke-width="2.2" stroke-linejoin="round"/>
<polyline points="410.8,191.8 420.0,191.5 426.7,190.0" fill="none" stroke="#FFFFFF" stroke-width="2.2" stroke-linejoin="round"/>
<polyline points="426.7,190.0 431.7,187.5 441.7,179.2 452.5,170.8 460.0,163.5 470.0,157.5 478.0,156.5 480.0,156.0" fill="none" stroke="#00FFFF" stroke-width="2.2" stroke-linejoin="round"/>
<polyline points="480.0,156.0 486.0,156.0" fill="none" stroke="#FFFFFF" stroke-width="2.2" stroke-linejoin="round"/>
<polyline points="486.0,156.0 491.0,157.0 498.8,159.0" fill="none" stroke="#FFA500" stroke-width="2.2" stroke-linejoin="round"/>
<polyline points="498.8,159.0 507.0,158.8" fill="none" stroke="#FFFFFF" stroke-width="2.2" stroke-linejoin="round"/>
<polyline points="507.0,158.8 511.7,156.7 517.5,154.2 523.0,153.5" fill="none" stroke="#00FFFF" stroke-width="2.2" stroke-linejoin="round"/>
<polyline points="523.0,153.5 532.0,152.8" fill="none" stroke="#FFFFFF" stroke-width="2.2" stroke-linejoin="round"/>
<polyline points="532.0,152.8 535.0,155.0 547.0,156.0" fill="none" stroke="#FFA500" stroke-width="2.2" stroke-linejoin="round"/>
<polyline points="547.0,156.0 550.0,154.8 558.0,150.0 565.0,145.0 572.0,138.0 580.0,132.5 588.0,128.0 595.0,126.2 605.0,125.6 607.0,126.0" fill="none" stroke="#00FFFF" stroke-width="2.2" stroke-linejoin="round"/>
<polyline points="607.0,126.0 612.0,127.5" fill="none" stroke="#FFFFFF" stroke-width="2.2" stroke-linejoin="round"/>
<polyline points="612.0,127.5 615.8,129.6 623.3,135.8 631.7,145.0 640.0,152.5 648.3,158.3 656.7,162.5 665.0,165.8 671.7,168.3 677.5,174.2 690.0,175.8 698.3,177.0 706.7,178.0 709.0,178.0" fill="none" stroke="#FFA500" stroke-width="2.2" stroke-linejoin="round"/>
<polyline points="709.0,178.0 715.0,175.8" fill="none" stroke="#FFFFFF" stroke-width="2.2" stroke-linejoin="round"/>
<polyline points="715.0,175.8 720.8,175.4 723.3,174.6 729.0,172.5 736.7,170.8 742.5,169.2 748.0,169.0" fill="none" stroke="#00FFFF" stroke-width="2.2" stroke-linejoin="round"/>
<polyline points="748.0,169.2 752.5,170.0 757.5,171.7" fill="none" stroke="#FFFFFF" stroke-width="2.2" stroke-linejoin="round"/>
<polyline points="757.5,171.7 765.0,175.8 771.7,179.2 777.5,183.3 779.0,185.0 781.0,186.0" fill="none" stroke="#FFA500" stroke-width="2.2" stroke-linejoin="round"/>
<polyline points="781.0,186.0 787.0,186.7" fill="none" stroke="#FFFFFF" stroke-width="2.2" stroke-linejoin="round"/>
<polyline points="787.0,186.7 792.5,185.4 798.3,184.2 806.7,183.3 810.8,180.8 816.7,174.2 823.3,169.2 829.0,165.0 835.0,164.6 840.0,164.6" fill="none" stroke="#00FFFF" stroke-width="2.2" stroke-linejoin="round"/>
<polyline points="840.0,164.6 846.0,166.0" fill="none" stroke="#FFFFFF" stroke-width="2.2" stroke-linejoin="round"/>
<polyline points="846.0,166.0 851.0,169.5 856.5,176.4 861.5,182.0 869.4,188.2 874.4,195.7 880.7,203.2 888.3,211.4 894.5,219.0 901.5,227.7 907.0,229.6 913.4,230.6 919.7,232.0 922.8,233.4 931.0,236.5 936.5,241.4 942.5,245.5 949.0,248.0 952.3,252.5 954.5,258.5 960.8,270.8 965.0,280.0 970.8,290.0 975.0,295.0 981.7,301.7 986.7,306.7 990.0,307.3 1000.0,307.3" fill="none" stroke="#FFA500" stroke-width="2.2" stroke-linejoin="round"/>
<polyline points="1000.0,307.3 1005.8,305.4" fill="none" stroke="#FFFFFF" stroke-width="2.2" stroke-linejoin="round"/>
<polyline points="1005.8,305.4 1015.0,301.7 1020.8,299.6 1034.6,298.0" fill="none" stroke="#00FFFF" stroke-width="2.2" stroke-linejoin="round"/>
<polyline points="1034.6,298.0 1040.0,298.3" fill="none" stroke="#FFA500" stroke-width="2.2" stroke-linejoin="round"/>
<polyline points="1040.0,298.2 1045.8,298.2" fill="none" stroke="#FFFFFF" stroke-width="2.2" stroke-linejoin="round"/>
<polyline points="1045.8,298.2 1053.3,299.2" fill="none" stroke="#FFA500" stroke-width="2.2" stroke-linejoin="round"/>
<polyline points="1053.3,299.2 1059.0,298.3" fill="none" stroke="#FFFFFF" stroke-width="2.2" stroke-linejoin="round"/>
<polyline points="1059.0,298.3 1067.5,298.5" fill="none" stroke="#00FFFF" stroke-width="2.2" stroke-linejoin="round"/>
<polyline points="1067.5,298.5 1070.8,299.2 1075.0,301.7 1080.0,307.5 1082.0,311.0 1088.0,327.5 1093.0,342.5 1100.0,352.5 1108.0,360.0 1115.0,372.5 1120.0,385.0 1125.0,395.0 1128.0,401.2 1138.0,408.0 1148.0,413.0 1155.0,417.0 1162.0,420.0 1165.0,421.0" fill="none" stroke="#FFA500" stroke-width="2.2" stroke-linejoin="round"/>
<polyline points="1165.0,421.0 1172.0,418.0" fill="none" stroke="#FFFFFF" stroke-width="2.2" stroke-linejoin="round"/>
<polyline points="1172.0,418.0 1175.0,417.0 1185.0,416.0 1192.0,413.0 1198.0,410.0 1205.0,405.6 1212.0,403.5 1213.0,403.5" fill="none" stroke="#00FFFF" stroke-width="2.2" stroke-linejoin="round"/>
<polyline points="1213.0,403.5 1219.0,404.2" fill="none" stroke="#FFFFFF" stroke-width="2.2" stroke-linejoin="round"/>
<polyline points="1219.0,404.2 1222.0,406.2 1230.0,409.4 1240.0,413.0 1250.0,417.0 1258.0,419.4 1265.0,422.5 1272.0,428.8 1280.0,440.0 1288.0,448.8 1295.0,455.0 1305.0,459.4 1315.0,463.8 1325.0,467.5 1333.0,467.5 1336.0,467.0" fill="none" stroke="#FFA500" stroke-width="2.2" stroke-linejoin="round"/>
<polyline points="1336.0,467.0 1341.0,465.0" fill="none" stroke="#FFFFFF" stroke-width="2.2" stroke-linejoin="round"/>
<polyline points="1341.0,465.0 1343.0,464.4 1350.0,462.0 1360.0,459.4 1367.0,456.2 1372.0,456.2 1375.0,457.0" fill="none" stroke="#00FFFF" stroke-width="2.2" stroke-linejoin="round"/>
<polyline points="1375.0,457.0 1382.0,460.0" fill="none" stroke="#FFFFFF" stroke-width="2.2" stroke-linejoin="round"/>
<polyline points="1382.0,460.0 1385.0,461.2 1392.0,467.5 1400.0,473.0 1408.0,481.2 1415.0,487.0 1425.0,492.5 1435.0,497.0 1442.0,498.0 1448.0,498.0" fill="none" stroke="#FFA500" stroke-width="2.2" stroke-linejoin="round"/>
<polyline points="1448.0,498.0 1458.0,500.0" fill="none" stroke="#FFFFFF" stroke-width="2.2" stroke-linejoin="round"/>
<polyline points="1458.0,500.0 1460.0,502.5 1469.0,508.8" fill="none" stroke="#FFA500" stroke-width="2.2" stroke-linejoin="round"/>
<line x1="285.5" x2="285.5" y1="28" y2="541" stroke="#fff" stroke-width="1" stroke-dasharray="3 3" shape-rendering="crispEdges"/>
<line x1="1021.5" x2="1021.5" y1="28" y2="541" stroke="#fff" stroke-width="1" stroke-dasharray="3 3" shape-rendering="crispEdges"/>
<line x1="1757.5" x2="1757.5" y1="28" y2="541" stroke="#fff" stroke-width="1" stroke-dasharray="3 3" shape-rendering="crispEdges"/>
<text x="987" y="540" font-size="16" fill="#808000" textLength="51" lengthAdjust="spacingAndGlyphs" font-weight="bold"  xml:space="preserve">Friday</text>
<rect x="5" y="42" width="153" height="153" fill="#101010" />
<g shape-rendering="crispEdges">
<rect x="5" y="106" width="1" height="24" fill="#1e90ff" />
<rect x="3" y="108" width="5" height="19" fill="#1e90ff" />
<rect x="4" y="109" width="3" height="17" fill="#0000ff" />
<rect x="13" y="108" width="1" height="23" fill="#ff6347" />
<rect x="11" y="108" width="5" height="5" fill="#ff6347" />
<rect x="12" y="109" width="3" height="3" fill="#ff4500" />
<rect x="21" y="111" width="1" height="15" fill="#ff6347" />
<rect x="19" y="112" width="5" height="7" fill="#ff6347" />
<rect x="20" y="113" width="3" height="5" fill="#ff4500" />
<rect x="29" y="81" width="1" height="42" fill="#1e90ff" />
<rect x="27" y="102" width="5" height="17" fill="#1e90ff" />
<rect x="28" y="103" width="3" height="15" fill="#0000ff" />
<rect x="37" y="98" width="1" height="24" fill="#ff6347" />
<rect x="35" y="102" width="5" height="14" fill="#ff6347" />
<rect x="36" y="103" width="3" height="12" fill="#ff4500" />
<rect x="45" y="83" width="1" height="50" fill="#1e90ff" />
<rect x="43" y="102" width="5" height="12" fill="#1e90ff" />
<rect x="44" y="103" width="3" height="10" fill="#0000ff" />
<rect x="53" y="56" width="1" height="50" fill="#1e90ff" />
<rect x="51" y="58" width="5" height="38" fill="#1e90ff" />
<rect x="52" y="59" width="3" height="36" fill="#0000ff" />
<rect x="61" y="54" width="1" height="123" fill="#ff6347" />
<rect x="59" y="59" width="5" height="96" fill="#ff6347" />
<rect x="60" y="60" width="3" height="94" fill="#ff4500" />
<rect x="69" y="128" width="1" height="51" fill="#1e90ff" />
<rect x="67" y="142" width="5" height="14" fill="#1e90ff" />
<rect x="68" y="143" width="3" height="12" fill="#0000ff" />
<rect x="77" y="125" width="1" height="34" fill="#1e90ff" />
<rect x="75" y="132" width="5" height="10" fill="#1e90ff" />
<rect x="76" y="133" width="3" height="8" fill="#0000ff" />
<rect x="85" y="125" width="1" height="71" fill="#ff6347" />
<rect x="83" y="132" width="5" height="48" fill="#ff6347" />
<rect x="84" y="133" width="3" height="46" fill="#ff4500" />
<rect x="93" y="168" width="1" height="47" fill="#ff6347" />
<rect x="91" y="179" width="5" height="25" fill="#ff6347" />
<rect x="92" y="180" width="3" height="23" fill="#ff4500" />
<rect x="101" y="165" width="1" height="45" fill="#1e90ff" />
<rect x="99" y="172" width="5" height="32" fill="#1e90ff" />
<rect x="100" y="173" width="3" height="30" fill="#0000ff" />
<rect x="109" y="165" width="1" height="26" fill="#ff6347" />
<rect x="107" y="172" width="5" height="6" fill="#ff6347" />
<rect x="108" y="173" width="3" height="4" fill="#ff4500" />
<rect x="117" y="172" width="1" height="29" fill="#ff6347" />
<rect x="115" y="177" width="5" height="4" fill="#ff6347" />
<rect x="116" y="178" width="3" height="2" fill="#ff4500" />
<rect x="125" y="170" width="1" height="35" fill="#ff6347" />
<rect x="123" y="180" width="5" height="22" fill="#ff6347" />
<rect x="124" y="181" width="3" height="20" fill="#ff4500" />
<rect x="133" y="202" width="1" height="46" fill="#ff6347" />
<rect x="131" y="202" width="5" height="43" fill="#ff6347" />
<rect x="132" y="203" width="3" height="41" fill="#ff4500" />
<rect x="141" y="217" width="1" height="30" fill="#1e90ff" />
<rect x="139" y="226" width="5" height="19" fill="#1e90ff" />
<rect x="140" y="227" width="3" height="17" fill="#0000ff" />
<rect x="149" y="211" width="1" height="22" fill="#ff6347" />
<rect x="147" y="226" width="5" height="4" fill="#ff6347" />
<rect x="148" y="227" width="3" height="2" fill="#ff4500" />
<rect x="157" y="215" width="1" height="23" fill="#1e90ff" />
<rect x="155" y="218" width="5" height="12" fill="#1e90ff" />
<rect x="156" y="219" width="3" height="10" fill="#0000ff" />
<rect x="165" y="206" width="1" height="26" fill="#ff6347" />
<rect x="163" y="218" width="5" height="13" fill="#ff6347" />
<rect x="164" y="219" width="3" height="11" fill="#ff4500" />
<rect x="173" y="222" width="1" height="20" fill="#ff6347" />
<rect x="171" y="230" width="5" height="10" fill="#ff6347" />
<rect x="172" y="231" width="3" height="8" fill="#ff4500" />
<rect x="181" y="230" width="1" height="23" fill="#ff6347" />
<rect x="179" y="239" width="5" height="10" fill="#ff6347" />
<rect x="180" y="240" width="3" height="8" fill="#ff4500" />
<rect x="189" y="227" width="1" height="29" fill="#1e90ff" />
<rect x="187" y="231" width="5" height="19" fill="#1e90ff" />
<rect x="188" y="232" width="3" height="17" fill="#0000ff" />
<rect x="197" y="223" width="1" height="9" fill="#1e90ff" />
<rect x="195" y="224" width="5" height="7" fill="#1e90ff" />
<rect x="196" y="225" width="3" height="5" fill="#0000ff" />
<rect x="205" y="214" width="1" height="13" fill="#1e90ff" />
<rect x="203" y="222" width="5" height="4" fill="#1e90ff" />
<rect x="204" y="223" width="3" height="2" fill="#0000ff" />
<rect x="213" y="213" width="1" height="10" fill="#1e90ff" />
<rect x="211" y="215" width="5" height="7" fill="#1e90ff" />
<rect x="212" y="216" width="3" height="5" fill="#0000ff" />
<rect x="221" y="200" width="1" height="16" fill="#1e90ff" />
<rect x="219" y="205" width="5" height="11" fill="#1e90ff" />
<rect x="220" y="206" width="3" height="9" fill="#0000ff" />
<rect x="229" y="203" width="1" height="18" fill="#ff6347" />
<rect x="227" y="205" width="5" height="12" fill="#ff6347" />
<rect x="228" y="206" width="3" height="10" fill="#ff4500" />
<rect x="237" y="216" width="1" height="5" fill="#ff6347" />
<rect x="235" y="217" width="5" height="1" fill="#ff6347" />
<rect x="245" y="204" width="1" height="17" fill="#1e90ff" />
<rect x="243" y="215" width="5" height="2" fill="#1e90ff" />
<rect x="253" y="214" width="1" height="6" fill="#ff6347" />
<rect x="251" y="214" width="5" height="4" fill="#ff6347" />
<rect x="252" y="215" width="3" height="2" fill="#ff4500" />
<rect x="261" y="216" width="1" height="4" fill="#1e90ff" />
<rect x="259" y="217" width="5" height="1" fill="#1e90ff" />
<rect x="269" y="212" width="1" height="7" fill="#1e90ff" />
<rect x="267" y="214" width="5" height="4" fill="#1e90ff" />
<rect x="268" y="215" width="3" height="2" fill="#0000ff" />
<rect x="277" y="205" width="1" height="10" fill="#1e90ff" />
<rect x="275" y="209" width="5" height="5" fill="#1e90ff" />
<rect x="276" y="210" width="3" height="3" fill="#0000ff" />
<rect x="285" y="206" width="1" height="8" fill="#1e90ff" />
<rect x="283" y="208" width="5" height="1" fill="#1e90ff" />
<rect x="293" y="205" width="1" height="7" fill="#ff6347" />
<rect x="291" y="209" width="5" height="1" fill="#ff6347" />
<rect x="301" y="207" width="1" height="6" fill="#ff6347" />
<rect x="299" y="209" width="5" height="1" fill="#ff6347" />
<rect x="309" y="206" width="1" height="9" fill="#1e90ff" />
<rect x="307" y="207" width="5" height="3" fill="#1e90ff" />
<rect x="308" y="208" width="3" height="1" fill="#0000ff" />
<rect x="317" y="195" width="1" height="13" fill="#1e90ff" />
<rect x="315" y="197" width="5" height="10" fill="#1e90ff" />
<rect x="316" y="198" width="3" height="8" fill="#0000ff" />
<rect x="325" y="193" width="1" height="7" fill="#ff6347" />
<rect x="323" y="198" width="5" height="1" fill="#ff6347" />
<rect x="333" y="190" width="1" height="13" fill="#1e90ff" />
<rect x="331" y="193" width="5" height="6" fill="#1e90ff" />
<rect x="332" y="194" width="3" height="4" fill="#0000ff" />
<rect x="341" y="190" width="1" height="9" fill="#ff6347" />
<rect x="339" y="194" width="5" height="1" fill="#ff6347" />
<rect x="349" y="193" width="1" height="23" fill="#ff6347" />
<rect x="347" y="193" width="5" height="20" fill="#ff6347" />
<rect x="348" y="194" width="3" height="18" fill="#ff4500" />
<rect x="357" y="206" width="1" height="11" fill="#1e90ff" />
<rect x="355" y="208" width="5" height="5" fill="#1e90ff" />
<rect x="356" y="209" width="3" height="3" fill="#0000ff" />
<rect x="365" y="203" width="1" height="16" fill="#1e90ff" />
<rect x="363" y="206" width="5" height="3" fill="#1e90ff" />
<rect x="364" y="207" width="3" height="1" fill="#0000ff" />
<rect x="373" y="200" width="1" height="14" fill="#ff6347" />
<rect x="371" y="205" width="5" height="5" fill="#ff6347" />
<rect x="372" y="206" width="3" height="3" fill="#ff4500" />
<rect x="381" y="184" width="1" height="34" fill="#1e90ff" />
<rect x="379" y="186" width="5" height="23" fill="#1e90ff" />
<rect x="380" y="187" width="3" height="21" fill="#0000ff" />
<rect x="389" y="176" width="1" height="14" fill="#1e90ff" />
<rect x="387" y="184" width="5" height="3" fill="#1e90ff" />
<rect x="388" y="185" width="3" height="1" fill="#0000ff" />
<rect x="397" y="180" width="1" height="26" fill="#ff6347" />
<rect x="395" y="183" width="5" height="14" fill="#ff6347" />
<rect x="396" y="184" width="3" height="12" fill="#ff4500" />
<rect x="405" y="182" width="1" height="14" fill="#1e90ff" />
<rect x="403" y="187" width="5" height="8" fill="#1e90ff" />
<rect x="404" y="188" width="3" height="6" fill="#0000ff" />
<rect x="413" y="185" width="1" height="11" fill="#ff6347" />
<rect x="411" y="187" width="5" height="5" fill="#ff6347" />
<rect x="412" y="188" width="3" height="3" fill="#ff4500" />
<rect x="421" y="190" width="1" height="11" fill="#ff6347" />
<rect x="419" y="192" width="5" height="6" fill="#ff6347" />
<rect x="420" y="193" width="3" height="4" fill="#ff4500" />
<rect x="429" y="171" width="1" height="29" fill="#1e90ff" />
<rect x="427" y="178" width="5" height="19" fill="#1e90ff" />
<rect x="428" y="179" width="3" height="17" fill="#0000ff" />
<rect x="437" y="165" width="1" height="18" fill="#1e90ff" />
<rect x="435" y="167" width="5" height="11" fill="#1e90ff" />
<rect x="436" y="168" width="3" height="9" fill="#0000ff" />
<rect x="445" y="150" width="1" height="20" fill="#1e90ff" />
<rect x="443" y="155" width="5" height="12" fill="#1e90ff" />
<rect x="444" y="156" width="3" height="10" fill="#0000ff" />
<rect x="453" y="150" width="1" height="19" fill="#ff6347" />
<rect x="451" y="156" width="5" height="1" fill="#ff6347" />
<rect x="461" y="146" width="1" height="12" fill="#1e90ff" />
<rect x="459" y="149" width="5" height="7" fill="#1e90ff" />
<rect x="460" y="150" width="3" height="5" fill="#0000ff" />
<rect x="469" y="149" width="1" height="14" fill="#ff6347" />
<rect x="467" y="149" width="5" height="4" fill="#ff6347" />
<rect x="468" y="150" width="3" height="2" fill="#ff4500" />
<rect x="477" y="151" width="1" height="15" fill="#ff6347" />
<rect x="475" y="152" width="5" height="10" fill="#ff6347" />
<rect x="476" y="153" width="3" height="8" fill="#ff4500" />
<rect x="485" y="152" width="1" height="11" fill="#1e90ff" />
<rect x="483" y="160" width="5" height="1" fill="#1e90ff" />
<rect x="493" y="154" width="1" height="8" fill="#1e90ff" />
<rect x="491" y="155" width="5" height="6" fill="#1e90ff" />
<rect x="492" y="156" width="3" height="4" fill="#0000ff" />
<rect x="501" y="154" width="1" height="17" fill="#ff6347" />
<rect x="499" y="155" width="5" height="15" fill="#ff6347" />
<rect x="500" y="156" width="3" height="13" fill="#ff4500" />
<rect x="509" y="146" width="1" height="26" fill="#1e90ff" />
<rect x="507" y="146" width="5" height="24" fill="#1e90ff" />
<rect x="508" y="147" width="3" height="22" fill="#0000ff" />
<rect x="517" y="140" width="1" height="13" fill="#1e90ff" />
<rect x="515" y="146" width="5" height="1" fill="#1e90ff" />
<rect x="525" y="142" width="1" height="16" fill="#ff6347" />
<rect x="523" y="146" width="5" height="5" fill="#ff6347" />
<rect x="524" y="147" width="3" height="3" fill="#ff4500" />
<rect x="533" y="144" width="1" height="21" fill="#ff6347" />
<rect x="531" y="150" width="5" height="9" fill="#ff6347" />
<rect x="532" y="151" width="3" height="7" fill="#ff4500" />
<rect x="541" y="158" width="1" height="16" fill="#ff6347" />
<rect x="539" y="159" width="5" height="4" fill="#ff6347" />
<rect x="540" y="160" width="3" height="2" fill="#ff4500" />
<rect x="549" y="144" width="1" height="28" fill="#1e90ff" />
<rect x="547" y="144" width="5" height="19" fill="#1e90ff" />
<rect x="548" y="145" width="3" height="17" fill="#0000ff" />
<rect x="557" y="126" width="1" height="22" fill="#1e90ff" />
<rect x="555" y="137" width="5" height="9" fill="#1e90ff" />
<rect x="556" y="138" width="3" height="7" fill="#0000ff" />
<rect x="565" y="130" width="1" height="13" fill="#1e90ff" />
<rect x="563" y="130" width="5" height="8" fill="#1e90ff" />
<rect x="564" y="131" width="3" height="6" fill="#0000ff" />
<rect x="573" y="109" width="1" height="27" fill="#1e90ff" />
<rect x="571" y="119" width="5" height="12" fill="#1e90ff" />
<rect x="572" y="120" width="3" height="10" fill="#0000ff" />
<rect x="581" y="117" width="1" height="13" fill="#ff6347" />
<rect x="579" y="119" width="5" height="7" fill="#ff6347" />
<rect x="580" y="120" width="3" height="5" fill="#ff4500" />
<rect x="589" y="118" width="1" height="17" fill="#1e90ff" />
<rect x="587" y="125" width="5" height="1" fill="#1e90ff" />
<rect x="597" y="120" width="1" height="12" fill="#ff6347" />
<rect x="595" y="124" width="5" height="4" fill="#ff6347" />
<rect x="596" y="125" width="3" height="2" fill="#ff4500" />
<rect x="605" y="119" width="1" height="12" fill="#1e90ff" />
<rect x="603" y="124" width="5" height="4" fill="#1e90ff" />
<rect x="604" y="125" width="3" height="2" fill="#0000ff" />
<rect x="613" y="116" width="1" height="26" fill="#ff6347" />
<rect x="611" y="124" width="5" height="16" fill="#ff6347" />
<rect x="612" y="125" width="3" height="14" fill="#ff4500" />
<rect x="621" y="139" width="1" height="17" fill="#ff6347" />
<rect x="619" y="139" width="5" height="11" fill="#ff6347" />
<rect x="620" y="140" width="3" height="9" fill="#ff4500" />
<rect x="629" y="148" width="1" height="20" fill="#ff6347" />
<rect x="627" y="149" width="5" height="16" fill="#ff6347" />
<rect x="628" y="150" width="3" height="14" fill="#ff4500" />
<rect x="637" y="158" width="1" height="10" fill="#1e90ff" />
<rect x="635" y="162" width="5" height="4" fill="#1e90ff" />
<rect x="636" y="163" width="3" height="2" fill="#0000ff" />
<rect x="645" y="158" width="1" height="16" fill="#ff6347" />
<rect x="643" y="162" width="5" height="1" fill="#ff6347" />
<rect x="653" y="154" width="1" height="13" fill="#ff6347" />
<rect x="651" y="163" width="5" height="4" fill="#ff6347" />
<rect x="652" y="164" width="3" height="2" fill="#ff4500" />
<rect x="661" y="159" width="1" height="11" fill="#ff6347" />
<rect x="659" y="167" width="5" height="1" fill="#ff6347" />
<rect x="669" y="167" width="1" height="17" fill="#ff6347" />
<rect x="667" y="167" width="5" height="14" fill="#ff6347" />
<rect x="668" y="168" width="3" height="12" fill="#ff4500" />
<rect x="677" y="178" width="1" height="15" fill="#ff6347" />
<rect x="675" y="180" width="5" height="8" fill="#ff6347" />
<rect x="676" y="181" width="3" height="6" fill="#ff4500" />
<rect x="685" y="169" width="1" height="20" fill="#1e90ff" />
<rect x="683" y="172" width="5" height="16" fill="#1e90ff" />
<rect x="684" y="173" width="3" height="14" fill="#0000ff" />
<rect x="693" y="162" width="1" height="16" fill="#ff6347" />
<rect x="691" y="172" width="5" height="5" fill="#ff6347" />
<rect x="692" y="173" width="3" height="3" fill="#ff4500" />
<rect x="701" y="174" width="1" height="7" fill="#ff6347" />
<rect x="699" y="177" width="5" height="2" fill="#ff6347" />
<rect x="709" y="174" width="1" height="15" fill="#ff6347" />
<rect x="707" y="178" width="5" height="3" fill="#ff6347" />
<rect x="708" y="179" width="3" height="1" fill="#ff4500" />
<rect x="717" y="162" width="1" height="19" fill="#1e90ff" />
<rect x="715" y="167" width="5" height="13" fill="#1e90ff" />
<rect x="716" y="168" width="3" height="11" fill="#0000ff" />
<rect x="725" y="163" width="1" height="14" fill="#ff6347" />
<rect x="723" y="166" width="5" height="9" fill="#ff6347" />
<rect x="724" y="167" width="3" height="7" fill="#ff4500" />
<rect x="733" y="161" width="1" height="19" fill="#1e90ff" />
<rect x="731" y="164" width="5" height="10" fill="#1e90ff" />
<rect x="732" y="165" width="3" height="8" fill="#0000ff" />
<rect x="741" y="154" width="1" height="19" fill="#ff6347" />
<rect x="739" y="164" width="5" height="3" fill="#ff6347" />
<rect x="740" y="165" width="3" height="1" fill="#ff4500" />
<rect x="749" y="147" width="1" height="33" fill="#ff6347" />
<rect x="747" y="165" width="5" height="15" fill="#ff6347" />
<rect x="748" y="166" width="3" height="13" fill="#ff4500" />
<rect x="757" y="171" width="1" height="16" fill="#1e90ff" />
<rect x="755" y="177" width="5" height="3" fill="#1e90ff" />
<rect x="756" y="178" width="3" height="1" fill="#0000ff" />
<rect x="765" y="163" width="1" height="38" fill="#ff6347" />
<rect x="763" y="177" width="5" height="17" fill="#ff6347" />
<rect x="764" y="178" width="3" height="15" fill="#ff4500" />
<rect x="773" y="178" width="1" height="23" fill="#1e90ff" />
<rect x="771" y="183" width="5" height="11" fill="#1e90ff" />
<rect x="772" y="184" width="3" height="9" fill="#0000ff" />
<rect x="781" y="176" width="1" height="42" fill="#ff6347" />
<rect x="779" y="183" width="5" height="21" fill="#ff6347" />
<rect x="780" y="184" width="3" height="19" fill="#ff4500" />
<rect x="789" y="167" width="1" height="38" fill="#1e90ff" />
<rect x="787" y="170" width="5" height="34" fill="#1e90ff" />
<rect x="788" y="171" width="3" height="32" fill="#0000ff" />
<rect x="797" y="161" width="1" height="24" fill="#ff6347" />
<rect x="795" y="170" width="5" height="12" fill="#ff6347" />
<rect x="796" y="171" width="3" height="10" fill="#ff4500" />
<rect x="805" y="169" width="1" height="23" fill="#ff6347" />
<rect x="803" y="182" width="5" height="1" fill="#ff6347" />
<rect x="813" y="155" width="1" height="47" fill="#1e90ff" />
<rect x="811" y="159" width="5" height="22" fill="#1e90ff" />
<rect x="812" y="160" width="3" height="20" fill="#0000ff" />
<rect x="821" y="141" width="1" height="30" fill="#1e90ff" />
<rect x="819" y="149" width="5" height="11" fill="#1e90ff" />
<rect x="820" y="150" width="3" height="9" fill="#0000ff" />
<rect x="829" y="145" width="1" height="21" fill="#ff6347" />
<rect x="827" y="149" width="5" height="14" fill="#ff6347" />
<rect x="828" y="150" width="3" height="12" fill="#ff4500" />
<rect x="837" y="158" width="1" height="13" fill="#ff6347" />
<rect x="835" y="162" width="5" height="7" fill="#ff6347" />
<rect x="836" y="163" width="3" height="5" fill="#ff4500" />
<rect x="845" y="159" width="1" height="20" fill="#ff6347" />
<rect x="843" y="169" width="5" height="8" fill="#ff6347" />
<rect x="844" y="170" width="3" height="6" fill="#ff4500" />
<rect x="853" y="174" width="1" height="21" fill="#ff6347" />
<rect x="851" y="176" width="5" height="19" fill="#ff6347" />
<rect x="852" y="177" width="3" height="17" fill="#ff4500" />
<rect x="861" y="193" width="1" height="34" fill="#ff6347" />
<rect x="859" y="194" width="5" height="5" fill="#ff6347" />
<rect x="860" y="195" width="3" height="3" fill="#ff4500" />
<rect x="869" y="189" width="1" height="11" fill="#1e90ff" />
<rect x="867" y="195" width="5" height="2" fill="#1e90ff" />
<rect x="877" y="195" width="1" height="34" fill="#ff6347" />
<rect x="875" y="195" width="5" height="32" fill="#ff6347" />
<rect x="876" y="196" width="3" height="30" fill="#ff4500" />
<rect x="885" y="212" width="1" height="17" fill="#1e90ff" />
<rect x="883" y="226" width="5" height="1" fill="#1e90ff" />
<rect x="893" y="226" width="1" height="21" fill="#ff6347" />
<rect x="891" y="226" width="5" height="9" fill="#ff6347" />
<rect x="892" y="227" width="3" height="7" fill="#ff4500" />
<rect x="901" y="228" width="1" height="26" fill="#ff6347" />
<rect x="899" y="235" width="5" height="7" fill="#ff6347" />
<rect x="900" y="236" width="3" height="5" fill="#ff4500" />
<rect x="909" y="224" width="1" height="26" fill="#1e90ff" />
<rect x="907" y="228" width="5" height="14" fill="#1e90ff" />
<rect x="908" y="229" width="3" height="12" fill="#0000ff" />
<rect x="917" y="217" width="1" height="14" fill="#1e90ff" />
<rect x="915" y="225" width="5" height="4" fill="#1e90ff" />
<rect x="916" y="226" width="3" height="2" fill="#0000ff" />
<rect x="925" y="224" width="1" height="28" fill="#ff6347" />
<rect x="923" y="225" width="5" height="22" fill="#ff6347" />
<rect x="924" y="226" width="3" height="20" fill="#ff4500" />
<rect x="933" y="241" width="1" height="13" fill="#ff6347" />
<rect x="931" y="246" width="5" height="5" fill="#ff6347" />
<rect x="932" y="247" width="3" height="3" fill="#ff4500" />
<rect x="941" y="246" width="1" height="13" fill="#ff6347" />
<rect x="939" y="250" width="5" height="8" fill="#ff6347" />
<rect x="940" y="251" width="3" height="6" fill="#ff4500" />
<rect x="949" y="252" width="1" height="8" fill="#1e90ff" />
<rect x="947" y="255" width="5" height="3" fill="#1e90ff" />
<rect x="948" y="256" width="3" height="1" fill="#0000ff" />
<rect x="957" y="253" width="1" height="62" fill="#ff6347" />
<rect x="955" y="255" width="5" height="55" fill="#ff6347" />
<rect x="956" y="256" width="3" height="53" fill="#ff4500" />
<rect x="965" y="303" width="1" height="20" fill="#ff6347" />
<rect x="963" y="310" width="5" height="1" fill="#ff6347" />
<rect x="973" y="304" width="1" height="22" fill="#ff6347" />
<rect x="971" y="311" width="5" height="9" fill="#ff6347" />
<rect x="972" y="312" width="3" height="7" fill="#ff4500" />
<rect x="981" y="300" width="1" height="25" fill="#1e90ff" />
<rect x="979" y="309" width="5" height="11" fill="#1e90ff" />
<rect x="980" y="310" width="3" height="9" fill="#0000ff" />
<rect x="989" y="307" width="1" height="13" fill="#1e90ff" />
<rect x="987" y="308" width="5" height="1" fill="#1e90ff" />
<rect x="997" y="293" width="1" height="19" fill="#1e90ff" />
<rect x="995" y="298" width="5" height="10" fill="#1e90ff" />
<rect x="996" y="299" width="3" height="8" fill="#0000ff" />
<rect x="1005" y="296" width="1" height="7" fill="#ff6347" />
<rect x="1003" y="299" width="5" height="1" fill="#ff6347" />
<rect x="1013" y="293" width="1" height="8" fill="#1e90ff" />
<rect x="1011" y="295" width="5" height="5" fill="#1e90ff" />
<rect x="1012" y="296" width="3" height="3" fill="#0000ff" />
<rect x="1021" y="282" width="1" height="25" fill="#ff6347" />
<rect x="1019" y="296" width="5" height="1" fill="#ff6347" />
<rect x="1029" y="296" width="1" height="5" fill="#ff6347" />
<rect x="1027" y="297" width="5" height="1" fill="#ff6347" />
<rect x="1037" y="297" width="1" height="5" fill="#ff6347" />
<rect x="1035" y="297" width="5" height="3" fill="#ff6347" />
<rect x="1036" y="298" width="3" height="1" fill="#ff4500" />
<rect x="1045" y="298" width="1" height="5" fill="#ff6347" />
<rect x="1043" y="300" width="5" height="1" fill="#ff6347" />
<rect x="1053" y="298" width="1" height="6" fill="#ff6347" />
<rect x="1051" y="300" width="5" height="1" fill="#ff6347" />
<rect x="1061" y="295" width="1" height="7" fill="#1e90ff" />
<rect x="1059" y="295" width="5" height="5" fill="#1e90ff" />
<rect x="1060" y="296" width="3" height="3" fill="#0000ff" />
<rect x="1069" y="295" width="1" height="6" fill="#ff6347" />
<rect x="1067" y="295" width="5" height="5" fill="#ff6347" />
<rect x="1068" y="296" width="3" height="3" fill="#ff4500" />
<rect x="1077" y="299" width="1" height="21" fill="#ff6347" />
<rect x="1075" y="299" width="5" height="21" fill="#ff6347" />
<rect x="1076" y="300" width="3" height="19" fill="#ff4500" />
<rect x="1085" y="319" width="1" height="74" fill="#ff6347" />
<rect x="1083" y="319" width="5" height="64" fill="#ff6347" />
<rect x="1084" y="320" width="3" height="62" fill="#ff4500" />
<rect x="1093" y="376" width="1" height="38" fill="#1e90ff" />
<rect x="1091" y="376" width="5" height="8" fill="#1e90ff" />
<rect x="1092" y="377" width="3" height="6" fill="#0000ff" />
<rect x="1101" y="362" width="1" height="18" fill="#1e90ff" />
<rect x="1099" y="364" width="5" height="13" fill="#1e90ff" />
<rect x="1100" y="365" width="3" height="11" fill="#0000ff" />
<rect x="1109" y="359" width="1" height="22" fill="#1e90ff" />
<rect x="1107" y="364" width="5" height="1" fill="#1e90ff" />
<rect x="1117" y="361" width="1" height="64" fill="#ff6347" />
<rect x="1115" y="363" width="5" height="52" fill="#ff6347" />
<rect x="1116" y="364" width="3" height="50" fill="#ff4500" />
<rect x="1125" y="404" width="1" height="46" fill="#ff6347" />
<rect x="1123" y="414" width="5" height="27" fill="#ff6347" />
<rect x="1124" y="415" width="3" height="25" fill="#ff4500" />
<rect x="1133" y="402" width="1" height="40" fill="#1e90ff" />
<rect x="1131" y="415" width="5" height="26" fill="#1e90ff" />
<rect x="1132" y="416" width="3" height="24" fill="#0000ff" />
<rect x="1141" y="405" width="1" height="20" fill="#1e90ff" />
<rect x="1139" y="413" width="5" height="2" fill="#1e90ff" />
<rect x="1149" y="399" width="1" height="18" fill="#1e90ff" />
<rect x="1147" y="412" width="5" height="2" fill="#1e90ff" />
<rect x="1157" y="408" width="1" height="29" fill="#ff6347" />
<rect x="1155" y="411" width="5" height="19" fill="#ff6347" />
<rect x="1156" y="412" width="3" height="17" fill="#ff4500" />
<rect x="1165" y="417" width="1" height="16" fill="#ff6347" />
<rect x="1163" y="429" width="5" height="2" fill="#ff6347" />
<rect x="1173" y="398" width="1" height="36" fill="#1e90ff" />
<rect x="1171" y="400" width="5" height="31" fill="#1e90ff" />
<rect x="1172" y="401" width="3" height="29" fill="#0000ff" />
<rect x="1181" y="393" width="1" height="29" fill="#ff6347" />
<rect x="1179" y="400" width="5" height="20" fill="#ff6347" />
<rect x="1180" y="401" width="3" height="18" fill="#ff4500" />
<rect x="1189" y="406" width="1" height="16" fill="#1e90ff" />
<rect x="1187" y="410" width="5" height="9" fill="#1e90ff" />
<rect x="1188" y="411" width="3" height="7" fill="#0000ff" />
<rect x="1197" y="394" width="1" height="19" fill="#1e90ff" />
<rect x="1195" y="396" width="5" height="14" fill="#1e90ff" />
<rect x="1196" y="397" width="3" height="12" fill="#0000ff" />
<rect x="1205" y="393" width="1" height="8" fill="#ff6347" />
<rect x="1203" y="396" width="5" height="3" fill="#ff6347" />
<rect x="1204" y="397" width="3" height="1" fill="#ff4500" />
<rect x="1213" y="394" width="1" height="12" fill="#ff6347" />
<rect x="1211" y="397" width="5" height="6" fill="#ff6347" />
<rect x="1212" y="398" width="3" height="4" fill="#ff4500" />
<rect x="1221" y="402" width="1" height="22" fill="#ff6347" />
<rect x="1219" y="402" width="5" height="12" fill="#ff6347" />
<rect x="1220" y="403" width="3" height="10" fill="#ff4500" />
<rect x="1229" y="411" width="1" height="13" fill="#008000" />
<rect x="1227" y="413" width="5" height="1" fill="#008000" />
<rect x="1237" y="413" width="1" height="15" fill="#ff6347" />
<rect x="1235" y="414" width="5" height="5" fill="#ff6347" />
<rect x="1236" y="415" width="3" height="3" fill="#ff4500" />
<rect x="1245" y="416" width="1" height="21" fill="#1e90ff" />
<rect x="1243" y="418" width="5" height="1" fill="#1e90ff" />
<rect x="1253" y="414" width="1" height="18" fill="#1e90ff" />
<rect x="1251" y="414" width="5" height="5" fill="#1e90ff" />
<rect x="1252" y="415" width="3" height="3" fill="#0000ff" />
<rect x="1261" y="414" width="1" height="27" fill="#ff6347" />
<rect x="1259" y="414" width="5" height="16" fill="#ff6347" />
<rect x="1260" y="415" width="3" height="14" fill="#ff4500" />
<rect x="1269" y="423" width="1" height="23" fill="#ff6347" />
<rect x="1267" y="429" width="5" height="3" fill="#ff6347" />
<rect x="1268" y="430" width="3" height="1" fill="#ff4500" />
<rect x="1277" y="428" width="1" height="59" fill="#ff6347" />
<rect x="1275" y="431" width="5" height="44" fill="#ff6347" />
<rect x="1276" y="432" width="3" height="42" fill="#ff4500" />
<rect x="1285" y="461" width="1" height="27" fill="#1e90ff" />
<rect x="1283" y="466" width="5" height="9" fill="#1e90ff" />
<rect x="1284" y="467" width="3" height="7" fill="#0000ff" />
<rect x="1293" y="448" width="1" height="25" fill="#1e90ff" />
<rect x="1291" y="465" width="5" height="1" fill="#1e90ff" />
<rect x="1301" y="437" width="1" height="37" fill="#1e90ff" />
<rect x="1299" y="453" width="5" height="12" fill="#1e90ff" />
<rect x="1300" y="454" width="3" height="10" fill="#0000ff" />
<rect x="1309" y="438" width="1" height="28" fill="#ff6347" />
<rect x="1307" y="452" width="5" height="12" fill="#ff6347" />
<rect x="1308" y="453" width="3" height="10" fill="#ff4500" />
<rect x="1317" y="463" width="1" height="19" fill="#ff6347" />
<rect x="1315" y="463" width="5" height="6" fill="#ff6347" />
<rect x="1316" y="464" width="3" height="4" fill="#ff4500" />
<rect x="1325" y="461" width="1" height="36" fill="#ff6347" />
<rect x="1323" y="468" width="5" height="13" fill="#ff6347" />
<rect x="1324" y="469" width="3" height="11" fill="#ff4500" />
<rect x="1333" y="463" width="1" height="19" fill="#1e90ff" />
<rect x="1331" y="463" width="5" height="18" fill="#1e90ff" />
<rect x="1332" y="464" width="3" height="16" fill="#0000ff" />
<rect x="1341" y="443" width="1" height="33" fill="#1e90ff" />
<rect x="1339" y="451" width="5" height="13" fill="#1e90ff" />
<rect x="1340" y="452" width="3" height="11" fill="#0000ff" />
<rect x="1349" y="446" width="1" height="27" fill="#1e90ff" />
<rect x="1347" y="449" width="5" height="3" fill="#1e90ff" />
<rect x="1348" y="450" width="3" height="1" fill="#0000ff" />
<rect x="1357" y="442" width="1" height="20" fill="#ff6347" />
<rect x="1355" y="449" width="5" height="13" fill="#ff6347" />
<rect x="1356" y="450" width="3" height="11" fill="#ff4500" />
<rect x="1365" y="442" width="1" height="20" fill="#1e90ff" />
<rect x="1363" y="449" width="5" height="13" fill="#1e90ff" />
<rect x="1364" y="450" width="3" height="11" fill="#0000ff" />
<rect x="1373" y="445" width="1" height="20" fill="#ff6347" />
<rect x="1371" y="449" width="5" height="12" fill="#ff6347" />
<rect x="1372" y="450" width="3" height="10" fill="#ff4500" />
<rect x="1381" y="453" width="1" height="25" fill="#ff6347" />
<rect x="1379" y="461" width="5" height="14" fill="#ff6347" />
<rect x="1380" y="462" width="3" height="12" fill="#ff4500" />
<rect x="1389" y="472" width="1" height="14" fill="#ff6347" />
<rect x="1387" y="474" width="5" height="6" fill="#ff6347" />
<rect x="1388" y="475" width="3" height="4" fill="#ff4500" />
<rect x="1397" y="472" width="1" height="11" fill="#1e90ff" />
<rect x="1395" y="476" width="5" height="4" fill="#1e90ff" />
<rect x="1396" y="477" width="3" height="2" fill="#0000ff" />
<rect x="1405" y="476" width="1" height="35" fill="#ff6347" />
<rect x="1403" y="476" width="5" height="28" fill="#ff6347" />
<rect x="1404" y="477" width="3" height="26" fill="#ff4500" />
<rect x="1413" y="489" width="1" height="20" fill="#1e90ff" />
<rect x="1411" y="489" width="5" height="15" fill="#1e90ff" />
<rect x="1412" y="490" width="3" height="13" fill="#0000ff" />
<rect x="1421" y="481" width="1" height="21" fill="#ff6347" />
<rect x="1419" y="489" width="5" height="11" fill="#ff6347" />
<rect x="1420" y="490" width="3" height="9" fill="#ff4500" />
<rect x="1429" y="496" width="1" height="12" fill="#ff6347" />
<rect x="1427" y="499" width="5" height="1" fill="#ff6347" />
<rect x="1437" y="496" width="1" height="17" fill="#ff6347" />
<rect x="1435" y="500" width="5" height="1" fill="#ff6347" />
<rect x="1445" y="488" width="1" height="25" fill="#1e90ff" />
<rect x="1443" y="490" width="5" height="11" fill="#1e90ff" />
<rect x="1444" y="491" width="3" height="9" fill="#0000ff" />
<rect x="1453" y="487" width="1" height="13" fill="#ff6347" />
<rect x="1451" y="491" width="5" height="7" fill="#ff6347" />
<rect x="1452" y="492" width="3" height="5" fill="#ff4500" />
<rect x="1461" y="497" width="1" height="28" fill="#ff6347" />
<rect x="1459" y="497" width="5" height="18" fill="#ff6347" />
<rect x="1460" y="498" width="3" height="16" fill="#ff4500" />
<rect x="1469" y="514" width="1" height="16" fill="#ff6347" />
<rect x="1467" y="514" width="5" height="16" fill="#ff6347" />
<rect x="1468" y="515" width="3" height="14" fill="#ff4500" />
</g>
<text x="13" y="67.5" font-size="11.6" fill="#fff" textLength="32" lengthAdjust="spacingAndGlyphs"  xml:space="preserve">--------</text>
<text x="53.5" y="67.5" font-size="11.6" fill="#fff" textLength="59.5" lengthAdjust="spacingAndGlyphs"  xml:space="preserve">PivotsD_v5</text>
<text x="121" y="67.5" font-size="11.6" fill="#fff" textLength="32" lengthAdjust="spacingAndGlyphs"  xml:space="preserve">--------</text>
<text x="21" y="79.6" font-size="11.6" fill="#fff" textLength="79" lengthAdjust="spacingAndGlyphs"  xml:space="preserve">Range  Today:</text>
<text x="113" y="79.6" font-size="11.6" fill="#fff" textLength="27" lengthAdjust="spacingAndGlyphs"  xml:space="preserve">3941</text>
<text x="46.5" y="91.6" font-size="11.6" fill="#fff" textLength="56.9" lengthAdjust="spacingAndGlyphs"  xml:space="preserve">Yesterday:</text>
<text x="116" y="91.6" font-size="11.6" fill="#fff" textLength="27.5" lengthAdjust="spacingAndGlyphs"  xml:space="preserve">3454</text>
<text x="21" y="103.7" font-size="11.6" fill="#fff" textLength="79.4" lengthAdjust="spacingAndGlyphs"  xml:space="preserve">30 Day Range:</text>
<text x="113" y="103.7" font-size="11.6" fill="#fff" textLength="27" lengthAdjust="spacingAndGlyphs"  xml:space="preserve">3034</text>
<text x="37.7" y="115.7" font-size="11.6" fill="#fff" textLength="64.6" lengthAdjust="spacingAndGlyphs"  xml:space="preserve">Next Bar In:</text>
<text x="115.6" y="115.7" font-size="11.6" fill="#fff" textLength="30.4" lengthAdjust="spacingAndGlyphs"  xml:space="preserve">12:20</text>
<text x="61.5" y="127.5" font-size="11.6" fill="#fff" textLength="40.8" lengthAdjust="spacingAndGlyphs"  xml:space="preserve">Spread:</text>
<text x="119.4" y="127.5" font-size="11.6" fill="#fff" textLength="13.1" lengthAdjust="spacingAndGlyphs"  xml:space="preserve">50</text>
<text x="37.5" y="139.5" font-size="11.6" fill="#fff" textLength="67.5" lengthAdjust="spacingAndGlyphs"  xml:space="preserve">Swap  Long:</text>
<text x="118" y="139.5" font-size="11.6" fill="#fff" textLength="28.5" lengthAdjust="spacingAndGlyphs"  xml:space="preserve">-2.15</text>
<text x="33.5" y="151.8" font-size="11.6" fill="#fff" textLength="70.5" lengthAdjust="spacingAndGlyphs"  xml:space="preserve">Swap  Short:</text>
<text x="117" y="151.8" font-size="11.6" fill="#fff" textLength="28.6" lengthAdjust="spacingAndGlyphs"  xml:space="preserve">-0.43</text>
<path d="M8 36h9l-4.5 5z" fill="#fff"/>
<text x="23.3" y="42.8" font-size="12" fill="#fff" textLength="57.2" lengthAdjust="spacingAndGlyphs"  xml:space="preserve">GOLD,M15</text>
<text x="89.3" y="42.8" font-size="12" fill="#fff" textLength="45.2" lengthAdjust="spacingAndGlyphs"  xml:space="preserve">2409.87</text>
<text x="139.3" y="42.8" font-size="12" fill="#fff" textLength="45.2" lengthAdjust="spacingAndGlyphs"  xml:space="preserve">2409.97</text>
<text x="189.3" y="42.8" font-size="12" fill="#fff" textLength="45.2" lengthAdjust="spacingAndGlyphs"  xml:space="preserve">2407.60</text>
<text x="239.3" y="42.8" font-size="12" fill="#fff" textLength="45.2" lengthAdjust="spacingAndGlyphs"  xml:space="preserve">2407.60</text>
<path d="M1477 29h11.5l-5.75 6z" fill="#778899"/>
</g>
<line x1="6" x2="1854" y1="593.5" y2="593.5" stroke="#fff" stroke-width="1" stroke-dasharray="3 3" shape-rendering="crispEdges"/>
<polyline points="5.0,583.8 25.0,580.6 45.0,575.4 53.0,573.3 62.0,573.8 80.0,577.5 95.0,582.7 115.0,593.0 130.0,604.6 150.0,623.3 165.0,633.8 180.0,643.0 195.0,652.5 205.0,654.6 212.0,655.0 225.0,650.4 250.0,640.0 270.0,634.8 290.0,627.5 315.0,618.0 340.0,606.7 350.0,603.5 375.0,600.4 400.0,595.2 410.0,591.0 430.0,588.3 445.0,582.7 455.0,577.5 465.0,571.2 475.0,567.0 485.0,565.4 500.0,564.4 520.0,562.5 540.0,561.9 555.0,563.3 565.0,562.5 580.0,558.8 595.0,554.6 610.0,554.2 620.0,555.0 635.0,558.8 650.0,563.0 665.0,569.2 680.0,577.5 695.0,584.8 710.0,591.0 720.0,595.2 735.0,599.4 755.0,601.5 775.0,604.6 790.0,606.7 800.0,607.7 815.0,604.6 830.0,599.4 845.0,596.7 860.0,598.3 875.0,600.8 890.0,604.6 905.0,610.8 925.0,620.2 945.0,630.6 960.0,638.0 980.0,650.4 995.0,657.7 1010.0,665.0 1020.0,667.0 1030.0,667.0 1045.0,664.0 1060.0,659.8 1070.0,656.7 1078.0,655.6 1090.0,658.8 1110.0,664.0 1125.0,671.2 1140.0,681.7 1155.0,690.0 1170.0,694.6 1180.0,695.2 1190.0,693.0 1200.0,689.0 1215.0,680.6 1230.0,673.3 1250.0,665.0 1265.0,661.9 1272.0,661.2 1278.0,663.0 1290.0,663.3 1320.0,663.5 1330.0,665.0 1340.0,664.6 1355.0,659.8 1370.0,652.5 1380.0,648.8 1395.0,646.7 1402.0,647.3 1412.0,648.3 1435.0,648.3 1445.0,649.4 1455.0,648.0 1465.0,649.4 1469.0,651.5" fill="none" stroke="#808080" stroke-width="1" />
<polyline points="5.0,591.0 25.0,587.5 45.0,582.7 60.0,581.2 75.0,583.8 85.0,590.0 100.0,604.6 115.0,616.0 125.0,621.2 140.0,635.8 155.0,646.2 170.0,655.6 185.0,661.2 200.0,662.5 215.0,662.5 235.0,658.8 260.0,648.3 285.0,638.0 310.0,627.5 340.0,615.0 360.0,609.8 375.0,606.7 400.0,600.4 420.0,595.8 435.0,593.0 450.0,588.0 462.0,583.3 475.0,578.5 485.0,574.4 500.0,570.2 520.0,565.4 535.0,565.0 560.0,565.0 575.0,561.9 590.0,560.4 605.0,559.2 615.0,557.7 625.0,560.8 635.0,567.0 650.0,575.4 665.0,584.8 680.0,592.0 695.0,597.3 710.0,602.5 730.0,604.2 750.0,605.6 765.0,607.7 785.0,610.8 800.0,610.6 820.0,607.7 840.0,605.0 855.0,604.2 870.0,606.7 885.0,615.0 900.0,623.3 912.0,629.6 930.0,634.8 945.0,640.0 952.0,644.2 965.0,656.7 980.0,668.0 995.0,675.4 1010.0,677.5 1020.0,675.8 1040.0,673.3 1055.0,669.6 1070.0,665.0 1082.0,664.6 1095.0,669.2 1110.0,675.4 1125.0,688.0 1140.0,697.3 1160.0,703.5 1170.0,704.6 1185.0,701.5 1200.0,699.4 1210.0,697.3 1225.0,690.0 1245.0,679.6 1260.0,672.3 1270.0,668.0 1280.0,667.0 1295.0,669.2 1310.0,670.6 1325.0,670.6 1335.0,668.8 1350.0,666.0 1370.0,660.8 1385.0,656.7 1400.0,653.5 1415.0,652.5 1430.0,653.0 1440.0,653.5 1455.0,651.5 1469.0,651.5" fill="none" stroke="#808080" stroke-width="1" />
<circle cx="5.2" cy="586.9" r="1.7" fill="#1e90ff"/>
<circle cx="13.2" cy="583.3" r="1.7" fill="#1e90ff"/>
<circle cx="21.2" cy="582.3" r="1.7" fill="#1e90ff"/>
<circle cx="29.2" cy="578.3" r="1.7" fill="#1e90ff"/>
<circle cx="37.2" cy="578.3" r="1.7" fill="#1e90ff"/>
<circle cx="45.2" cy="574.4" r="1.7" fill="#1e90ff"/>
<circle cx="53.2" cy="563.5" r="1.7" fill="#1e90ff"/>
<circle cx="61.2" cy="575.4" r="1.7" fill="#dc143c"/>
<circle cx="69.2" cy="582.7" r="1.7" fill="#dc143c"/>
<circle cx="77.2" cy="586.5" r="1.7" fill="#dc143c"/>
<circle cx="85.2" cy="598.75" r="1.7" fill="#dc143c"/>
<circle cx="93.2" cy="614.4" r="1.7" fill="#dc143c"/>
<circle cx="101.2" cy="619.6" r="1.7" fill="#dc143c"/>
<circle cx="109.2" cy="623.3" r="1.7" fill="#dc143c"/>
<circle cx="117.2" cy="627.5" r="1.7" fill="#dc143c"/>
<circle cx="125.2" cy="635.4" r="1.7" fill="#dc143c"/>
<circle cx="133.2" cy="649.4" r="1.7" fill="#dc143c"/>
<circle cx="141.2" cy="656.7" r="1.7" fill="#dc143c"/>
<circle cx="149.2" cy="661.5" r="1.7" fill="#dc143c"/>
<circle cx="157.2" cy="662.5" r="1.7" fill="#dc143c"/>
<circle cx="165.2" cy="664.6" r="1.7" fill="#dc143c"/>
<circle cx="173.2" cy="667.5" r="1.7" fill="#dc143c"/>
<circle cx="181.2" cy="671.5" r="1.7" fill="#dc143c"/>
<circle cx="189.2" cy="669.6" r="1.7" fill="#1e90ff"/>
<circle cx="197.2" cy="666.5" r="1.7" fill="#1e90ff"/>
<circle cx="205.2" cy="661.5" r="1.7" fill="#1e90ff"/>
<circle cx="213.2" cy="656.7" r="1.7" fill="#1e90ff"/>
<circle cx="221.2" cy="649.4" r="1.7" fill="#1e90ff"/>
<circle cx="229.2" cy="645.4" r="1.7" fill="#1e90ff"/>
<circle cx="237.2" cy="641.5" r="1.7" fill="#1e90ff"/>
<circle cx="245.2" cy="637.3" r="1.7" fill="#1e90ff"/>
<circle cx="253.2" cy="635.4" r="1.7" fill="#1e90ff"/>
<circle cx="261.2" cy="632.5" r="1.7" fill="#1e90ff"/>
<circle cx="269.2" cy="628.5" r="1.7" fill="#1e90ff"/>
<circle cx="277.2" cy="624.4" r="1.7" fill="#1e90ff"/>
<circle cx="285.2" cy="621.7" r="1.7" fill="#1e90ff"/>
<circle cx="293.2" cy="618.5" r="1.7" fill="#1e90ff"/>
<circle cx="301.2" cy="615.4" r="1.7" fill="#1e90ff"/>
<circle cx="309.2" cy="613.3" r="1.7" fill="#1e90ff"/>
<circle cx="317.2" cy="608.3" r="1.7" fill="#1e90ff"/>
<circle cx="325.2" cy="604.6" r="1.7" fill="#1e90ff"/>
<circle cx="333.2" cy="600.4" r="1.7" fill="#1e90ff"/>
<circle cx="341.2" cy="597.5" r="1.7" fill="#1e90ff"/>
<circle cx="349.2" cy="599.6" r="1.7" fill="#dc143c"/>
<circle cx="357.2" cy="599.6" r="1.7" fill="#dc143c"/>
<circle cx="365.2" cy="599.6" r="1.7" fill="#1e90ff"/>
<circle cx="373.2" cy="599.6" r="1.7" fill="#dc143c"/>
<circle cx="381.2" cy="594.6" r="1.7" fill="#1e90ff"/>
<circle cx="389.2" cy="590.4" r="1.7" fill="#1e90ff"/>
<circle cx="397.2" cy="590.4" r="1.7" fill="#1e90ff"/>
<circle cx="405.2" cy="587.5" r="1.7" fill="#1e90ff"/>
<circle cx="413.2" cy="586.5" r="1.7" fill="#1e90ff"/>
<circle cx="421.2" cy="587.5" r="1.7" fill="#dc143c"/>
<circle cx="429.2" cy="584.4" r="1.7" fill="#1e90ff"/>
<circle cx="437.2" cy="579.4" r="1.7" fill="#1e90ff"/>
<circle cx="445.2" cy="572.3" r="1.7" fill="#1e90ff"/>
<circle cx="453.2" cy="568.3" r="1.7" fill="#1e90ff"/>
<circle cx="461.2" cy="563.3" r="1.7" fill="#1e90ff"/>
<circle cx="469.2" cy="560.4" r="1.7" fill="#1e90ff"/>
<circle cx="477.2" cy="561.5" r="1.7" fill="#dc143c"/>
<circle cx="485.2" cy="561.5" r="1.7" fill="#dc143c"/>
<circle cx="493.2" cy="561.5" r="1.7" fill="#1e90ff"/>
<circle cx="501.2" cy="563.3" r="1.7" fill="#dc143c"/>
<circle cx="509.2" cy="561.5" r="1.7" fill="#1e90ff"/>
<circle cx="517.2" cy="560.4" r="1.7" fill="#1e90ff"/>
<circle cx="525.2" cy="560.4" r="1.7" fill="#dc143c"/>
<circle cx="533.2" cy="562.5" r="1.7" fill="#dc143c"/>
<circle cx="541.2" cy="565.4" r="1.7" fill="#dc143c"/>
<circle cx="549.2" cy="564.4" r="1.7" fill="#1e90ff"/>
<circle cx="557.2" cy="562.5" r="1.7" fill="#1e90ff"/>
<circle cx="565.2" cy="559.4" r="1.7" fill="#1e90ff"/>
<circle cx="573.2" cy="555.4" r="1.7" fill="#1e90ff"/>
<circle cx="581.2" cy="553.5" r="1.7" fill="#1e90ff"/>
<circle cx="589.2" cy="552.5" r="1.7" fill="#1e90ff"/>
<circle cx="597.2" cy="553.5" r="1.7" fill="#dc143c"/>
<circle cx="605.2" cy="553.5" r="1.7" fill="#1e90ff"/>
<circle cx="613.2" cy="557.5" r="1.7" fill="#dc143c"/>
<circle cx="621.2" cy="562.5" r="1.7" fill="#dc143c"/>
<circle cx="629.2" cy="570.4" r="1.7" fill="#dc143c"/>
<circle cx="637.2" cy="576.5" r="1.7" fill="#dc143c"/>
<circle cx="645.2" cy="581.5" r="1.7" fill="#dc143c"/>
<circle cx="653.2" cy="586.5" r="1.7" fill="#dc143c"/>
<circle cx="661.2" cy="590.4" r="1.7" fill="#dc143c"/>
<circle cx="669.2" cy="595.4" r="1.7" fill="#dc143c"/>
<circle cx="677.2" cy="602.5" r="1.7" fill="#dc143c"/>
<circle cx="685.2" cy="603.5" r="1.7" fill="#dc143c"/>
<circle cx="693.2" cy="605.4" r="1.7" fill="#dc143c"/>
<circle cx="701.2" cy="607.5" r="1.7" fill="#dc143c"/>
<circle cx="709.2" cy="609.4" r="1.7" fill="#dc143c"/>
<circle cx="717.2" cy="607.5" r="1.7" fill="#1e90ff"/>
<circle cx="725.2" cy="607.5" r="1.7" fill="#dc143c"/>
<circle cx="733.2" cy="605.4" r="1.7" fill="#1e90ff"/>
<circle cx="741.2" cy="603.5" r="1.7" fill="#1e90ff"/>
<circle cx="749.2" cy="605.4" r="1.7" fill="#dc143c"/>
<circle cx="757.2" cy="606.5" r="1.7" fill="#dc143c"/>
<circle cx="765.2" cy="609.4" r="1.7" fill="#dc143c"/>
<circle cx="773.2" cy="610.4" r="1.7" fill="#dc143c"/>
<circle cx="781.2" cy="615.4" r="1.7" fill="#dc143c"/>
<circle cx="789.2" cy="611.5" r="1.7" fill="#1e90ff"/>
<circle cx="797.2" cy="610.4" r="1.7" fill="#1e90ff"/>
<circle cx="805.2" cy="609.4" r="1.7" fill="#1e90ff"/>
<circle cx="813.2" cy="604.4" r="1.7" fill="#1e90ff"/>
<circle cx="821.2" cy="597.3" r="1.7" fill="#1e90ff"/>
<circle cx="829.2" cy="595.4" r="1.7" fill="#1e90ff"/>
<circle cx="837.2" cy="594.4" r="1.7" fill="#1e90ff"/>
<circle cx="845.2" cy="596.5" r="1.7" fill="#dc143c"/>
<circle cx="853.2" cy="600.4" r="1.7" fill="#dc143c"/>
<circle cx="861.2" cy="605.4" r="1.7" fill="#dc143c"/>
<circle cx="869.2" cy="607.5" r="1.7" fill="#dc143c"/>
<circle cx="877.2" cy="616.5" r="1.7" fill="#dc143c"/>
<circle cx="885.2" cy="622.5" r="1.7" fill="#dc143c"/>
<circle cx="893.2" cy="629.6" r="1.7" fill="#dc143c"/>
<circle cx="901.2" cy="635.4" r="1.7" fill="#dc143c"/>
<circle cx="909.2" cy="637.5" r="1.7" fill="#dc143c"/>
<circle cx="917.2" cy="637.5" r="1.7" fill="#dc143c"/>
<circle cx="925.2" cy="641.5" r="1.7" fill="#dc143c"/>
<circle cx="933.2" cy="644.4" r="1.7" fill="#dc143c"/>
<circle cx="941.2" cy="648.3" r="1.7" fill="#dc143c"/>
<circle cx="949.2" cy="650.4" r="1.7" fill="#dc143c"/>
<circle cx="957.2" cy="662.5" r="1.7" fill="#dc143c"/>
<circle cx="965.2" cy="671.5" r="1.7" fill="#dc143c"/>
<circle cx="973.2" cy="679.4" r="1.7" fill="#dc143c"/>
<circle cx="981.2" cy="682.5" r="1.7" fill="#dc143c"/>
<circle cx="989.2" cy="683.5" r="1.7" fill="#dc143c"/>
<circle cx="997.2" cy="681.5" r="1.7" fill="#1e90ff"/>
<circle cx="1005.2" cy="679.4" r="1.7" fill="#1e90ff"/>
<circle cx="1013.2" cy="675.4" r="1.7" fill="#1e90ff"/>
<circle cx="1021.2" cy="672.3" r="1.7" fill="#1e90ff"/>
<circle cx="1029.2" cy="668.5" r="1.7" fill="#1e90ff"/>
<circle cx="1037.2" cy="665.4" r="1.7" fill="#1e90ff"/>
<circle cx="1045.2" cy="662.5" r="1.7" fill="#1e90ff"/>
<circle cx="1053.2" cy="658.5" r="1.7" fill="#1e90ff"/>
<circle cx="1061.2" cy="654.4" r="1.7" fill="#1e90ff"/>
<circle cx="1069.2" cy="651.5" r="1.7" fill="#1e90ff"/>
<circle cx="1077.2" cy="652.5" r="1.7" fill="#dc143c"/>
<circle cx="1085.2" cy="666.5" r="1.7" fill="#dc143c"/>
<circle cx="1093.2" cy="674.4" r="1.7" fill="#dc143c"/>
<circle cx="1101.2" cy="677.5" r="1.7" fill="#dc143c"/>
<circle cx="1109.2" cy="679.4" r="1.7" fill="#dc143c"/>
<circle cx="1117.2" cy="689.4" r="1.7" fill="#dc143c"/>
<circle cx="1125.2" cy="703.5" r="1.7" fill="#dc143c"/>
<circle cx="1133.2" cy="706.5" r="1.7" fill="#dc143c"/>
<circle cx="1141.2" cy="707.5" r="1.7" fill="#dc143c"/>
<circle cx="1149.2" cy="707.5" r="1.7" fill="#1e90ff"/>
<circle cx="1157.2" cy="708.5" r="1.7" fill="#dc143c"/>
<circle cx="1165.2" cy="709.6" r="1.7" fill="#dc143c"/>
<circle cx="1173.2" cy="701.5" r="1.7" fill="#1e90ff"/>
<circle cx="1181.2" cy="698.5" r="1.7" fill="#1e90ff"/>
<circle cx="1189.2" cy="693.5" r="1.7" fill="#1e90ff"/>
<circle cx="1197.2" cy="684.4" r="1.7" fill="#1e90ff"/>
<circle cx="1205.2" cy="677.5" r="1.7" fill="#1e90ff"/>
<circle cx="1213.2" cy="671.5" r="1.7" fill="#1e90ff"/>
<circle cx="1221.2" cy="668.5" r="1.7" fill="#1e90ff"/>
<circle cx="1229.2" cy="665.4" r="1.7" fill="#1e90ff"/>
<circle cx="1237.2" cy="663.5" r="1.7" fill="#1e90ff"/>
<circle cx="1245.2" cy="660.4" r="1.7" fill="#1e90ff"/>
<circle cx="1253.2" cy="657.5" r="1.7" fill="#1e90ff"/>
<circle cx="1261.2" cy="656.5" r="1.7" fill="#1e90ff"/>
<circle cx="1269.2" cy="656.5" r="1.7" fill="#1e90ff"/>
<circle cx="1277.2" cy="664.4" r="1.7" fill="#dc143c"/>
<circle cx="1285.2" cy="667.5" r="1.7" fill="#dc143c"/>
<circle cx="1293.2" cy="669.6" r="1.7" fill="#dc143c"/>
<circle cx="1301.2" cy="667.5" r="1.7" fill="#1e90ff"/>
<circle cx="1309.2" cy="667.5" r="1.7" fill="#1e90ff"/>
<circle cx="1317.2" cy="667.5" r="1.7" fill="#1e90ff"/>
<circle cx="1325.2" cy="669.6" r="1.7" fill="#dc143c"/>
<circle cx="1333.2" cy="666.5" r="1.7" fill="#1e90ff"/>
<circle cx="1341.2" cy="660.4" r="1.7" fill="#1e90ff"/>
<circle cx="1349.2" cy="654.4" r="1.7" fill="#1e90ff"/>
<circle cx="1357.2" cy="651.5" r="1.7" fill="#1e90ff"/>
<circle cx="1365.2" cy="646.5" r="1.7" fill="#1e90ff"/>
<circle cx="1373.2" cy="644.4" r="1.7" fill="#1e90ff"/>
<circle cx="1381.2" cy="644.4" r="1.7" fill="#dc143c"/>
<circle cx="1389.2" cy="645.4" r="1.7" fill="#dc143c"/>
<circle cx="1397.2" cy="645.4" r="1.7" fill="#1e90ff"/>
<circle cx="1405.2" cy="649.4" r="1.7" fill="#dc143c"/>
<circle cx="1413.2" cy="650.4" r="1.7" fill="#dc143c"/>
<circle cx="1421.2" cy="651.5" r="1.7" fill="#dc143c"/>
<circle cx="1429.2" cy="652.5" r="1.7" fill="#dc143c"/>
<circle cx="1437.2" cy="651.5" r="1.7" fill="#1e90ff"/>
<circle cx="1445.2" cy="649.4" r="1.7" fill="#1e90ff"/>
<circle cx="1453.2" cy="647.5" r="1.7" fill="#1e90ff"/>
<circle cx="1461.2" cy="649.4" r="1.7" fill="#dc143c"/>
<circle cx="1469.2" cy="653.5" r="1.7" fill="#dc143c"/>
<text x="9.4" y="559" font-size="12" fill="#fff" textLength="13.1" lengthAdjust="spacingAndGlyphs"  xml:space="preserve">BB</text>
<text x="27.7" y="559" font-size="12" fill="#fff" textLength="26.9" lengthAdjust="spacingAndGlyphs"  xml:space="preserve">Macd</text>
<text x="59.8" y="559" font-size="12" fill="#fff" textLength="51.7" lengthAdjust="spacingAndGlyphs"  xml:space="preserve">(12,26,9)</text>
<text x="116.7" y="559" font-size="12" fill="#fff" textLength="34.3" lengthAdjust="spacingAndGlyphs"  xml:space="preserve">-3.377</text>
<text x="156.7" y="559" font-size="12" fill="#fff" textLength="34.6" lengthAdjust="spacingAndGlyphs"  xml:space="preserve">-3.478</text>
<text x="196.9" y="559" font-size="12" fill="#fff" textLength="34.8" lengthAdjust="spacingAndGlyphs"  xml:space="preserve">-3.608</text>
<text x="237" y="559" font-size="12" fill="#fff" textLength="34.9" lengthAdjust="spacingAndGlyphs"  xml:space="preserve">-3.608</text>
<g shape-rendering="crispEdges">
<rect x="8" y="734" width="50" height="9" fill="#1e90ff" />
<rect x="80" y="734" width="186" height="9" fill="#dc143c" />
<rect x="384" y="734" width="10" height="9" fill="#1e90ff" />
<rect x="400" y="734" width="218" height="9" fill="#1e90ff" />
<rect x="664" y="734" width="50" height="9" fill="#dc143c" />
<rect x="720" y="734" width="10" height="9" fill="#dc143c" />
<rect x="736" y="734" width="50" height="9" fill="#dc143c" />
<rect x="792" y="734" width="18" height="9" fill="#dc143c" />
<rect x="856" y="734" width="618" height="9" fill="#dc143c" />
</g>
<text x="9" y="734.8" font-size="12" fill="#fff" textLength="64.3" lengthAdjust="spacingAndGlyphs"  xml:space="preserve">FXprime_V2</text>
<text x="78.3" y="734.8" font-size="12" fill="#fff" textLength="38.5" lengthAdjust="spacingAndGlyphs"  xml:space="preserve">Final-JE</text>
<text x="122" y="734.8" font-size="12" fill="#fff" textLength="37" lengthAdjust="spacingAndGlyphs"  xml:space="preserve">0.0000</text>
<text x="164.5" y="734.8" font-size="12" fill="#fff" textLength="62.5" lengthAdjust="spacingAndGlyphs"  xml:space="preserve">-5153.1989</text>
<text x="232.5" y="734.8" font-size="12" fill="#fff" textLength="37.5" lengthAdjust="spacingAndGlyphs"  xml:space="preserve">0.0000</text>
<text x="275.5" y="734.8" font-size="12" fill="#fff" textLength="37.5" lengthAdjust="spacingAndGlyphs"  xml:space="preserve">0.2000</text>
<g shape-rendering="crispEdges">
<rect x="4" y="801" width="3" height="13" fill="#ff0000" />
<rect x="13" y="801" width="1" height="13" fill="#ffa500" />
<rect x="21" y="801" width="1" height="12" fill="#ffa500" />
<rect x="44" y="794" width="3" height="7" fill="#008000" />
<rect x="52" y="783" width="3" height="18" fill="#008000" />
<rect x="61" y="789" width="1" height="12" fill="#00ff00" />
<rect x="69" y="794" width="1" height="7" fill="#00ff00" />
<rect x="77" y="794" width="1" height="7" fill="#00ff00" />
<rect x="92" y="801" width="3" height="8" fill="#ff0000" />
<rect x="100" y="801" width="3" height="10" fill="#ff0000" />
<rect x="108" y="801" width="3" height="20" fill="#ff0000" />
<rect x="116" y="801" width="3" height="28" fill="#ff0000" />
<rect x="124" y="801" width="3" height="38" fill="#ff0000" />
<rect x="132" y="801" width="3" height="55" fill="#ff0000" />
<rect x="140" y="801" width="3" height="65" fill="#ff0000" />
<rect x="148" y="801" width="3" height="76" fill="#ff0000" />
<rect x="156" y="801" width="3" height="80" fill="#ff0000" />
<rect x="164" y="801" width="3" height="83" fill="#ff0000" />
<rect x="172" y="801" width="3" height="84" fill="#ff0000" />
<rect x="180" y="801" width="3" height="87" fill="#ff0000" />
<rect x="189" y="801" width="1" height="83" fill="#ffa500" />
<rect x="197" y="801" width="1" height="77" fill="#ffa500" />
<rect x="205" y="801" width="1" height="65" fill="#ffa500" />
<rect x="213" y="801" width="1" height="48" fill="#ffa500" />
<rect x="221" y="801" width="1" height="40" fill="#ffa500" />
<rect x="229" y="801" width="1" height="31" fill="#ffa500" />
<rect x="237" y="801" width="1" height="20" fill="#ffa500" />
<rect x="245" y="801" width="1" height="15" fill="#ffa500" />
<rect x="253" y="801" width="1" height="13" fill="#ffa500" />
<rect x="261" y="801" width="1" height="7" fill="#ffa500" />
<rect x="276" y="796" width="3" height="6" fill="#008000" />
<rect x="284" y="788" width="3" height="13" fill="#008000" />
<rect x="293" y="788" width="1" height="13" fill="#00ff00" />
<rect x="300" y="788" width="3" height="13" fill="#008000" />
<rect x="308" y="788" width="3" height="13" fill="#008000" />
<rect x="316" y="784" width="3" height="17" fill="#008000" />
<rect x="324" y="784" width="3" height="17" fill="#008000" />
<rect x="333" y="784" width="1" height="17" fill="#00ff00" />
<rect x="341" y="786" width="1" height="15" fill="#00ff00" />
<rect x="349" y="790" width="1" height="11" fill="#00ff00" />
<rect x="357" y="793" width="1" height="8" fill="#00ff00" />
<rect x="365" y="794" width="1" height="7" fill="#00ff00" />
<rect x="373" y="794" width="1" height="7" fill="#00ff00" />
<rect x="380" y="791" width="3" height="10" fill="#008000" />
<rect x="388" y="789" width="3" height="12" fill="#008000" />
<rect x="397" y="789" width="1" height="12" fill="#00ff00" />
<rect x="404" y="789" width="3" height="12" fill="#008000" />
<rect x="413" y="789" width="1" height="12" fill="#00ff00" />
<rect x="421" y="791" width="1" height="10" fill="#00ff00" />
<rect x="428" y="790" width="3" height="11" fill="#008000" />
<rect x="436" y="786" width="3" height="15" fill="#008000" />
<rect x="444" y="783" width="3" height="18" fill="#008000" />
<rect x="452" y="780" width="3" height="21" fill="#008000" />
<rect x="460" y="776" width="3" height="25" fill="#008000" />
<rect x="468" y="774" width="3" height="27" fill="#008000" />
<rect x="476" y="772" width="3" height="29" fill="#008000" />
<rect x="484" y="772" width="3" height="29" fill="#008000" />
<rect x="492" y="769" width="3" height="32" fill="#008000" />
<rect x="501" y="769" width="1" height="32" fill="#00ff00" />
<rect x="509" y="770" width="1" height="31" fill="#00ff00" />
<rect x="517" y="771" width="1" height="30" fill="#00ff00" />
<rect x="525" y="773" width="1" height="28" fill="#00ff00" />
<rect x="533" y="777" width="1" height="24" fill="#00ff00" />
<rect x="541" y="780" width="1" height="21" fill="#00ff00" />
<rect x="548" y="780" width="3" height="21" fill="#008000" />
<rect x="557" y="780" width="1" height="21" fill="#00ff00" />
<rect x="564" y="780" width="3" height="21" fill="#008000" />
<rect x="572" y="780" width="3" height="21" fill="#008000" />
<rect x="581" y="783" width="1" height="18" fill="#00ff00" />
<rect x="589" y="783" width="1" height="18" fill="#00ff00" />
<rect x="596" y="782" width="3" height="19" fill="#008000" />
<rect x="604" y="782" width="3" height="19" fill="#008000" />
<rect x="613" y="782" width="1" height="18" fill="#00ff00" />
<rect x="621" y="783" width="1" height="18" fill="#00ff00" />
<rect x="629" y="787" width="1" height="14" fill="#00ff00" />
<rect x="637" y="793" width="1" height="8" fill="#00ff00" />
<rect x="660" y="801" width="3" height="8" fill="#ff0000" />
<rect x="668" y="801" width="3" height="14" fill="#ff0000" />
<rect x="676" y="801" width="3" height="20" fill="#ff0000" />
<rect x="684" y="801" width="3" height="23" fill="#ff0000" />
<rect x="692" y="801" width="3" height="28" fill="#ff0000" />
<rect x="700" y="801" width="3" height="34" fill="#ff0000" />
<rect x="708" y="801" width="3" height="36" fill="#ff0000" />
<rect x="717" y="801" width="1" height="36" fill="#ffa500" />
<rect x="725" y="801" width="1" height="35" fill="#ffa500" />
<rect x="733" y="801" width="1" height="29" fill="#ffa500" />
<rect x="741" y="801" width="1" height="24" fill="#ffa500" />
<rect x="749" y="801" width="1" height="20" fill="#ffa500" />
<rect x="757" y="801" width="1" height="17" fill="#ffa500" />
<rect x="765" y="801" width="1" height="14" fill="#ffa500" />
<rect x="773" y="801" width="1" height="12" fill="#ffa500" />
<rect x="780" y="801" width="3" height="12" fill="#ff0000" />
<rect x="789" y="801" width="1" height="10" fill="#ffa500" />
<rect x="797" y="801" width="1" height="8" fill="#ffa500" />
<rect x="805" y="801" width="1" height="8" fill="#ffa500" />
<rect x="868" y="801" width="3" height="6" fill="#ff0000" />
<rect x="876" y="801" width="3" height="10" fill="#ff0000" />
<rect x="884" y="801" width="3" height="16" fill="#ff0000" />
<rect x="892" y="801" width="3" height="21" fill="#ff0000" />
<rect x="900" y="801" width="3" height="26" fill="#ff0000" />
<rect x="908" y="801" width="3" height="30" fill="#ff0000" />
<rect x="916" y="801" width="3" height="33" fill="#ff0000" />
<rect x="924" y="801" width="3" height="39" fill="#ff0000" />
<rect x="932" y="801" width="3" height="45" fill="#ff0000" />
<rect x="940" y="801" width="3" height="54" fill="#ff0000" />
<rect x="948" y="801" width="3" height="56" fill="#ff0000" />
<rect x="956" y="801" width="3" height="65" fill="#ff0000" />
<rect x="964" y="801" width="3" height="75" fill="#ff0000" />
<rect x="972" y="801" width="3" height="80" fill="#ff0000" />
<rect x="981" y="801" width="1" height="80" fill="#ffa500" />
<rect x="989" y="801" width="1" height="77" fill="#ffa500" />
<rect x="997" y="801" width="1" height="73" fill="#ffa500" />
<rect x="1005" y="801" width="1" height="68" fill="#ffa500" />
<rect x="1013" y="801" width="1" height="65" fill="#ffa500" />
<rect x="1021" y="801" width="1" height="58" fill="#ffa500" />
<rect x="1029" y="801" width="1" height="52" fill="#ffa500" />
<rect x="1037" y="801" width="1" height="48" fill="#ffa500" />
<rect x="1045" y="801" width="1" height="44" fill="#ffa500" />
<rect x="1053" y="801" width="1" height="40" fill="#ffa500" />
<rect x="1061" y="801" width="1" height="34" fill="#ffa500" />
<rect x="1069" y="801" width="1" height="28" fill="#ffa500" />
<rect x="1077" y="801" width="1" height="24" fill="#ffa500" />
<rect x="1084" y="801" width="3" height="28" fill="#ff0000" />
<rect x="1092" y="801" width="3" height="32" fill="#ff0000" />
<rect x="1100" y="801" width="3" height="32" fill="#ff0000" />
<rect x="1109" y="801" width="1" height="31" fill="#ffa500" />
<rect x="1116" y="801" width="3" height="42" fill="#ff0000" />
<rect x="1124" y="801" width="3" height="58" fill="#ff0000" />
<rect x="1132" y="801" width="3" height="70" fill="#ff0000" />
<rect x="1140" y="801" width="3" height="76" fill="#ff0000" />
<rect x="1148" y="801" width="3" height="82" fill="#ff0000" />
<rect x="1156" y="801" width="3" height="87" fill="#ff0000" />
<rect x="1164" y="801" width="3" height="90" fill="#ff0000" />
<rect x="1173" y="801" width="1" height="87" fill="#ffa500" />
<rect x="1181" y="801" width="1" height="84" fill="#ffa500" />
<rect x="1189" y="801" width="1" height="79" fill="#ffa500" />
<rect x="1197" y="801" width="1" height="70" fill="#ffa500" />
<rect x="1205" y="801" width="1" height="60" fill="#ffa500" />
<rect x="1213" y="801" width="1" height="48" fill="#ffa500" />
<rect x="1221" y="801" width="1" height="38" fill="#ffa500" />
<rect x="1229" y="801" width="1" height="25" fill="#ffa500" />
<rect x="1237" y="801" width="1" height="15" fill="#ffa500" />
<rect x="1245" y="801" width="1" height="14" fill="#ffa500" />
<rect x="1253" y="801" width="1" height="10" fill="#ffa500" />
<rect x="1261" y="801" width="1" height="5" fill="#ffa500" />
<rect x="1276" y="801" width="3" height="9" fill="#ff0000" />
<rect x="1284" y="801" width="3" height="18" fill="#ff0000" />
<rect x="1292" y="801" width="3" height="24" fill="#ff0000" />
<rect x="1300" y="801" width="3" height="27" fill="#ff0000" />
<rect x="1308" y="801" width="3" height="30" fill="#ff0000" />
<rect x="1316" y="801" width="3" height="37" fill="#ff0000" />
<rect x="1324" y="801" width="3" height="44" fill="#ff0000" />
<rect x="1333" y="801" width="1" height="44" fill="#ffa500" />
<rect x="1341" y="801" width="1" height="44" fill="#ffa500" />
<rect x="1349" y="801" width="1" height="41" fill="#ffa500" />
<rect x="1357" y="801" width="1" height="38" fill="#ffa500" />
<rect x="1365" y="801" width="1" height="32" fill="#ffa500" />
<rect x="1373" y="801" width="1" height="28" fill="#ffa500" />
<rect x="1381" y="801" width="1" height="26" fill="#ffa500" />
<rect x="1389" y="801" width="1" height="24" fill="#ffa500" />
<rect x="1397" y="801" width="1" height="23" fill="#ffa500" />
<rect x="1404" y="801" width="3" height="23" fill="#ff0000" />
<rect x="1413" y="801" width="1" height="19" fill="#ffa500" />
<rect x="1421" y="801" width="1" height="19" fill="#ffa500" />
<rect x="1429" y="801" width="1" height="18" fill="#ffa500" />
<rect x="1436" y="801" width="3" height="23" fill="#ff0000" />
<rect x="1444" y="801" width="3" height="24" fill="#ff0000" />
<rect x="1452" y="801" width="3" height="26" fill="#ff0000" />
<rect x="1460" y="801" width="3" height="28" fill="#ff0000" />
<rect x="1468" y="801" width="3" height="33" fill="#ff0000" />
</g>
<polyline points="5.5,814.0 13.5,814.0 21.5,812.7 29.5,805.0 37.5,799.4 45.5,794.0 53.5,782.7 61.5,789.0 69.5,793.6 77.5,794.2 85.5,800.0 93.5,809.5 101.5,811.0 109.5,820.5 117.5,829.0 125.5,839.0 133.5,855.6 141.5,865.8 149.5,876.8 157.5,880.6 165.5,883.8 173.5,885.3 181.5,888.0 189.5,883.8 197.5,878.3 205.5,865.8 213.5,848.6 221.5,840.8 229.5,832.2 237.5,821.3 245.5,816.0 253.5,814.2 261.5,808.0 269.5,803.3 277.5,795.5 285.5,787.7 293.5,787.7 301.5,787.7 309.5,787.7 317.5,783.8 325.5,783.8 333.5,784.2 341.5,786.0 349.5,790.3 357.5,792.7 365.5,794.0 373.5,794.0 381.5,791.0 389.5,789.2 397.5,789.0 405.5,789.0 413.5,789.2 421.5,790.8 429.5,790.0 437.5,786.4 445.5,782.7 453.5,779.6 461.5,776.4 469.5,774.4 477.5,772.4 485.5,771.8 493.5,769.2 501.5,769.2 509.5,770.2 517.5,771.3 525.5,772.8 533.5,777.0 541.5,779.9 549.5,779.9 557.5,779.9 565.5,779.9 573.5,780.2 581.5,782.7 589.5,782.7 597.5,782.2 605.5,782.2 613.5,782.5 621.5,783.0 629.5,787.0 637.5,793.0 645.5,798.3 653.5,803.3 661.5,809.5 669.5,815.0 677.5,820.5 685.5,823.6 693.5,829.0 701.5,834.5 709.5,837.0 717.5,837.0 725.5,836.0 733.5,829.9 741.5,825.2 749.5,821.3 757.5,818.0 765.5,815.0 773.5,812.7 781.5,812.7 789.5,811.0 797.5,809.2 805.5,808.8 813.5,804.0 821.5,798.3 829.5,796.8 837.5,796.8 845.5,796.8 853.5,800.0 861.5,804.0 869.5,807.2 877.5,811.0 885.5,816.6 893.5,822.0 901.5,827.5 909.5,831.0 917.5,834.2 925.5,840.0 933.5,846.3 941.5,855.0 949.5,856.8 957.5,865.8 965.5,876.0 973.5,880.6 981.5,880.6 989.5,878.3 997.5,874.4 1005.5,869.2 1013.5,865.8 1021.5,858.8 1029.5,852.5 1037.5,848.6 1045.5,844.7 1053.5,840.8 1061.5,835.3 1069.5,829.0 1077.5,824.9 1085.5,829.0 1093.5,832.7 1101.5,833.0 1109.5,831.8 1117.5,843.0 1125.5,858.8 1133.5,870.5 1141.5,877.5 1149.5,883.0 1157.5,887.7 1165.5,890.8 1173.5,888.0 1181.5,884.9 1189.5,879.6 1197.5,870.5 1205.5,860.8 1213.5,849.4 1221.5,838.5 1229.5,826.0 1237.5,816.0 1245.5,814.5 1253.5,810.8 1261.5,806.4 1269.5,803.0 1277.5,810.3 1285.5,819.0 1293.5,824.9 1301.5,828.0 1309.5,831.0 1317.5,837.7 1325.5,844.7 1333.5,844.7 1341.5,844.7 1349.5,842.4 1357.5,839.2 1365.5,833.3 1373.5,829.0 1381.5,827.0 1389.5,825.2 1397.5,824.0 1405.5,823.6 1413.5,820.2 1421.5,820.2 1429.5,818.6 1437.5,823.6 1445.5,825.5 1453.5,827.5 1461.5,829.0 1469.5,834.2" fill="none" stroke="#808080" stroke-width="2" stroke-linejoin="round"/>
<circle cx="5.2" cy="801.2" r="3.2" fill="#f0f0ff"/>
<circle cx="13.2" cy="801.2" r="3.2" fill="#f0f0ff"/>
<circle cx="21.2" cy="801.2" r="3.2" fill="#1e90ff"/>
<circle cx="29.2" cy="801.2" r="3.2" fill="#f0f0ff"/>
<circle cx="37.2" cy="801.2" r="3.2" fill="#f0f0ff"/>
<circle cx="45.2" cy="801.2" r="3.2" fill="#f0f0ff"/>
<circle cx="53.2" cy="801.2" r="3.2" fill="#1e90ff"/>
<circle cx="61.2" cy="801.2" r="3.2" fill="#f0f0ff"/>
<circle cx="69.2" cy="801.2" r="3.2" fill="#f0f0ff"/>
<circle cx="77.2" cy="801.2" r="3.2" fill="#f0f0ff"/>
<circle cx="85.2" cy="801.2" r="3.2" fill="#f0f0ff"/>
<circle cx="93.2" cy="801.2" r="3.2" fill="#1e90ff"/>
<circle cx="101.2" cy="801.2" r="3.2" fill="#1e90ff"/>
<circle cx="109.2" cy="801.2" r="3.2" fill="#1e90ff"/>
<circle cx="117.2" cy="801.2" r="3.2" fill="#1e90ff"/>
<circle cx="125.2" cy="801.2" r="3.2" fill="#1e90ff"/>
<circle cx="133.2" cy="801.2" r="3.2" fill="#1e90ff"/>
<circle cx="141.2" cy="801.2" r="3.2" fill="#1e90ff"/>
<circle cx="149.2" cy="801.2" r="3.2" fill="#1e90ff"/>
<circle cx="157.2" cy="801.2" r="3.2" fill="#1e90ff"/>
<circle cx="165.2" cy="801.2" r="3.2" fill="#1e90ff"/>
<circle cx="173.2" cy="801.2" r="3.2" fill="#1e90ff"/>
<circle cx="181.2" cy="801.2" r="3.2" fill="#1e90ff"/>
<circle cx="189.2" cy="801.2" r="3.2" fill="#1e90ff"/>
<circle cx="197.2" cy="801.2" r="3.2" fill="#1e90ff"/>
<circle cx="205.2" cy="801.2" r="3.2" fill="#1e90ff"/>
<circle cx="213.2" cy="801.2" r="3.2" fill="#1e90ff"/>
<circle cx="221.2" cy="801.2" r="3.2" fill="#1e90ff"/>
<circle cx="229.2" cy="801.2" r="3.2" fill="#1e90ff"/>
<circle cx="237.2" cy="801.2" r="3.2" fill="#1e90ff"/>
<circle cx="245.2" cy="801.2" r="3.2" fill="#1e90ff"/>
<circle cx="253.2" cy="801.2" r="3.2" fill="#1e90ff"/>
<circle cx="261.2" cy="801.2" r="3.2" fill="#1e90ff"/>
<circle cx="269.2" cy="801.2" r="3.2" fill="#1e90ff"/>
<circle cx="277.2" cy="801.2" r="3.2" fill="#f0f0ff"/>
<circle cx="285.2" cy="801.2" r="3.2" fill="#f0f0ff"/>
<circle cx="293.2" cy="801.2" r="3.2" fill="#f0f0ff"/>
<circle cx="301.2" cy="801.2" r="3.2" fill="#1e90ff"/>
<circle cx="309.2" cy="801.2" r="3.2" fill="#1e90ff"/>
<circle cx="317.2" cy="801.2" r="3.2" fill="#1e90ff"/>
<circle cx="325.2" cy="801.2" r="3.2" fill="#1e90ff"/>
<circle cx="333.2" cy="801.2" r="3.2" fill="#1e90ff"/>
<circle cx="341.2" cy="801.2" r="3.2" fill="#1e90ff"/>
<circle cx="349.2" cy="801.2" r="3.2" fill="#1e90ff"/>
<circle cx="357.2" cy="801.2" r="3.2" fill="#1e90ff"/>
<circle cx="365.2" cy="801.2" r="3.2" fill="#1e90ff"/>
<circle cx="373.2" cy="801.2" r="3.2" fill="#f0f0ff"/>
<circle cx="381.2" cy="801.2" r="3.2" fill="#1e90ff"/>
<circle cx="389.2" cy="801.2" r="3.2" fill="#1e90ff"/>
<circle cx="397.2" cy="801.2" r="3.2" fill="#1e90ff"/>
<circle cx="405.2" cy="801.2" r="3.2" fill="#1e90ff"/>
<circle cx="413.2" cy="801.2" r="3.2" fill="#1e90ff"/>
<circle cx="421.2" cy="801.2" r="3.2" fill="#f0f0ff"/>
<circle cx="429.2" cy="801.2" r="3.2" fill="#f0f0ff"/>
<circle cx="437.2" cy="801.2" r="3.2" fill="#1e90ff"/>
<circle cx="445.2" cy="801.2" r="3.2" fill="#1e90ff"/>
<circle cx="453.2" cy="801.2" r="3.2" fill="#1e90ff"/>
<circle cx="461.2" cy="801.2" r="3.2" fill="#1e90ff"/>
<circle cx="469.2" cy="801.2" r="3.2" fill="#1e90ff"/>
<circle cx="477.2" cy="801.2" r="3.2" fill="#1e90ff"/>
<circle cx="485.2" cy="801.2" r="3.2" fill="#1e90ff"/>
<circle cx="493.2" cy="801.2" r="3.2" fill="#1e90ff"/>
<circle cx="501.2" cy="801.2" r="3.2" fill="#1e90ff"/>
<circle cx="509.2" cy="801.2" r="3.2" fill="#1e90ff"/>
<circle cx="517.2" cy="801.2" r="3.2" fill="#1e90ff"/>
<circle cx="525.2" cy="801.2" r="3.2" fill="#1e90ff"/>
<circle cx="533.2" cy="801.2" r="3.2" fill="#1e90ff"/>
<circle cx="541.2" cy="801.2" r="3.2" fill="#1e90ff"/>
<circle cx="549.2" cy="801.2" r="3.2" fill="#1e90ff"/>
<circle cx="557.2" cy="801.2" r="3.2" fill="#1e90ff"/>
<circle cx="565.2" cy="801.2" r="3.2" fill="#1e90ff"/>
<circle cx="573.2" cy="801.2" r="3.2" fill="#1e90ff"/>
<circle cx="581.2" cy="801.2" r="3.2" fill="#1e90ff"/>
<circle cx="589.2" cy="801.2" r="3.2" fill="#1e90ff"/>
<circle cx="597.2" cy="801.2" r="3.2" fill="#1e90ff"/>
<circle cx="605.2" cy="801.2" r="3.2" fill="#1e90ff"/>
<circle cx="613.2" cy="801.2" r="3.2" fill="#1e90ff"/>
<circle cx="621.2" cy="801.2" r="3.2" fill="#1e90ff"/>
<circle cx="629.2" cy="801.2" r="3.2" fill="#1e90ff"/>
<circle cx="637.2" cy="801.2" r="3.2" fill="#1e90ff"/>
<circle cx="645.2" cy="801.2" r="3.2" fill="#1e90ff"/>
<circle cx="653.2" cy="801.2" r="3.2" fill="#1e90ff"/>
<circle cx="661.2" cy="801.2" r="3.2" fill="#1e90ff"/>
<circle cx="669.2" cy="801.2" r="3.2" fill="#1e90ff"/>
<circle cx="677.2" cy="801.2" r="3.2" fill="#1e90ff"/>
<circle cx="685.2" cy="801.2" r="3.2" fill="#1e90ff"/>
<circle cx="693.2" cy="801.2" r="3.2" fill="#1e90ff"/>
<circle cx="701.2" cy="801.2" r="3.2" fill="#1e90ff"/>
<circle cx="709.2" cy="801.2" r="3.2" fill="#1e90ff"/>
<circle cx="717.2" cy="801.2" r="3.2" fill="#1e90ff"/>
<circle cx="725.2" cy="801.2" r="3.2" fill="#1e90ff"/>
<circle cx="733.2" cy="801.2" r="3.2" fill="#1e90ff"/>
<circle cx="741.2" cy="801.2" r="3.2" fill="#1e90ff"/>
<circle cx="749.2" cy="801.2" r="3.2" fill="#1e90ff"/>
<circle cx="757.2" cy="801.2" r="3.2" fill="#1e90ff"/>
<circle cx="765.2" cy="801.2" r="3.2" fill="#f0f0ff"/>
<circle cx="773.2" cy="801.2" r="3.2" fill="#f0f0ff"/>
<circle cx="781.2" cy="801.2" r="3.2" fill="#f0f0ff"/>
<circle cx="789.2" cy="801.2" r="3.2" fill="#f0f0ff"/>
<circle cx="797.2" cy="801.2" r="3.2" fill="#f0f0ff"/>
<circle cx="805.2" cy="801.2" r="3.2" fill="#f0f0ff"/>
<circle cx="813.2" cy="801.2" r="3.2" fill="#f0f0ff"/>
<circle cx="821.2" cy="801.2" r="3.2" fill="#f0f0ff"/>
<circle cx="829.2" cy="801.2" r="3.2" fill="#f0f0ff"/>
<circle cx="837.2" cy="801.2" r="3.2" fill="#f0f0ff"/>
<circle cx="845.2" cy="801.2" r="3.2" fill="#f0f0ff"/>
<circle cx="853.2" cy="801.2" r="3.2" fill="#f0f0ff"/>
<circle cx="861.2" cy="801.2" r="3.2" fill="#f0f0ff"/>
<circle cx="869.2" cy="801.2" r="3.2" fill="#f0f0ff"/>
<circle cx="877.2" cy="801.2" r="3.2" fill="#f0f0ff"/>
<circle cx="885.2" cy="801.2" r="3.2" fill="#1e90ff"/>
<circle cx="893.2" cy="801.2" r="3.2" fill="#1e90ff"/>
<circle cx="901.2" cy="801.2" r="3.2" fill="#1e90ff"/>
<circle cx="909.2" cy="801.2" r="3.2" fill="#1e90ff"/>
<circle cx="917.2" cy="801.2" r="3.2" fill="#1e90ff"/>
<circle cx="925.2" cy="801.2" r="3.2" fill="#1e90ff"/>
<circle cx="933.2" cy="801.2" r="3.2" fill="#1e90ff"/>
<circle cx="941.2" cy="801.2" r="3.2" fill="#1e90ff"/>
<circle cx="949.2" cy="801.2" r="3.2" fill="#1e90ff"/>
<circle cx="957.2" cy="801.2" r="3.2" fill="#1e90ff"/>
<circle cx="965.2" cy="801.2" r="3.2" fill="#1e90ff"/>
<circle cx="973.2" cy="801.2" r="3.2" fill="#1e90ff"/>
<circle cx="981.2" cy="801.2" r="3.2" fill="#1e90ff"/>
<circle cx="989.2" cy="801.2" r="3.2" fill="#1e90ff"/>
<circle cx="997.2" cy="801.2" r="3.2" fill="#1e90ff"/>
<circle cx="1005.2" cy="801.2" r="3.2" fill="#1e90ff"/>
<circle cx="1013.2" cy="801.2" r="3.2" fill="#1e90ff"/>
<circle cx="1021.2" cy="801.2" r="3.2" fill="#1e90ff"/>
<circle cx="1029.2" cy="801.2" r="3.2" fill="#1e90ff"/>
<circle cx="1037.2" cy="801.2" r="3.2" fill="#1e90ff"/>
<circle cx="1045.2" cy="801.2" r="3.2" fill="#1e90ff"/>
<circle cx="1053.2" cy="801.2" r="3.2" fill="#1e90ff"/>
<circle cx="1061.2" cy="801.2" r="3.2" fill="#1e90ff"/>
<circle cx="1069.2" cy="801.2" r="3.2" fill="#1e90ff"/>
<circle cx="1077.2" cy="801.2" r="3.2" fill="#1e90ff"/>
<circle cx="1085.2" cy="801.2" r="3.2" fill="#1e90ff"/>
<circle cx="1093.2" cy="801.2" r="3.2" fill="#1e90ff"/>
<circle cx="1101.2" cy="801.2" r="3.2" fill="#1e90ff"/>
<circle cx="1109.2" cy="801.2" r="3.2" fill="#1e90ff"/>
<circle cx="1117.2" cy="801.2" r="3.2" fill="#1e90ff"/>
<circle cx="1125.2" cy="801.2" r="3.2" fill="#1e90ff"/>
<circle cx="1133.2" cy="801.2" r="3.2" fill="#1e90ff"/>
<circle cx="1141.2" cy="801.2" r="3.2" fill="#1e90ff"/>
<circle cx="1149.2" cy="801.2" r="3.2" fill="#1e90ff"/>
<circle cx="1157.2" cy="801.2" r="3.2" fill="#1e90ff"/>
<circle cx="1165.2" cy="801.2" r="3.2" fill="#1e90ff"/>
<circle cx="1173.2" cy="801.2" r="3.2" fill="#1e90ff"/>
<circle cx="1181.2" cy="801.2" r="3.2" fill="#1e90ff"/>
<circle cx="1189.2" cy="801.2" r="3.2" fill="#1e90ff"/>
<circle cx="1197.2" cy="801.2" r="3.2" fill="#1e90ff"/>
<circle cx="1205.2" cy="801.2" r="3.2" fill="#1e90ff"/>
<circle cx="1213.2" cy="801.2" r="3.2" fill="#1e90ff"/>
<circle cx="1221.2" cy="801.2" r="3.2" fill="#1e90ff"/>
<circle cx="1229.2" cy="801.2" r="3.2" fill="#1e90ff"/>
<circle cx="1237.2" cy="801.2" r="3.2" fill="#1e90ff"/>
<circle cx="1245.2" cy="801.2" r="3.2" fill="#1e90ff"/>
<circle cx="1253.2" cy="801.2" r="3.2" fill="#1e90ff"/>
<circle cx="1261.2" cy="801.2" r="3.2" fill="#f0f0ff"/>
<circle cx="1269.2" cy="801.2" r="3.2" fill="#f0f0ff"/>
<circle cx="1277.2" cy="801.2" r="3.2" fill="#f0f0ff"/>
<circle cx="1285.2" cy="801.2" r="3.2" fill="#1e90ff"/>
<circle cx="1293.2" cy="801.2" r="3.2" fill="#1e90ff"/>
<circle cx="1301.2" cy="801.2" r="3.2" fill="#1e90ff"/>
<circle cx="1309.2" cy="801.2" r="3.2" fill="#1e90ff"/>
<circle cx="1317.2" cy="801.2" r="3.2" fill="#1e90ff"/>
<circle cx="1325.2" cy="801.2" r="3.2" fill="#1e90ff"/>
<circle cx="1333.2" cy="801.2" r="3.2" fill="#1e90ff"/>
<circle cx="1341.2" cy="801.2" r="3.2" fill="#1e90ff"/>
<circle cx="1349.2" cy="801.2" r="3.2" fill="#1e90ff"/>
<circle cx="1357.2" cy="801.2" r="3.2" fill="#1e90ff"/>
<circle cx="1365.2" cy="801.2" r="3.2" fill="#1e90ff"/>
<circle cx="1373.2" cy="801.2" r="3.2" fill="#1e90ff"/>
<circle cx="1381.2" cy="801.2" r="3.2" fill="#1e90ff"/>
<circle cx="1389.2" cy="801.2" r="3.2" fill="#1e90ff"/>
<circle cx="1397.2" cy="801.2" r="3.2" fill="#1e90ff"/>
<circle cx="1405.2" cy="801.2" r="3.2" fill="#1e90ff"/>
<circle cx="1413.2" cy="801.2" r="3.2" fill="#f0f0ff"/>
<circle cx="1421.2" cy="801.2" r="3.2" fill="#f0f0ff"/>
<circle cx="1429.2" cy="801.2" r="3.2" fill="#f0f0ff"/>
<circle cx="1437.2" cy="801.2" r="3.2" fill="#1e90ff"/>
<circle cx="1445.2" cy="801.2" r="3.2" fill="#1e90ff"/>
<circle cx="1453.2" cy="801.2" r="3.2" fill="#1e90ff"/>
<circle cx="1461.2" cy="801.2" r="3.2" fill="#1e90ff"/>
<circle cx="1469.2" cy="801.2" r="3.2" fill="#1e90ff"/>
<text x="9.4" y="776.8" font-size="12" fill="#fff" textLength="21.6" lengthAdjust="spacingAndGlyphs"  xml:space="preserve">M15</text>
<text x="36.7" y="776.8" font-size="12" fill="#fff" textLength="29.7" lengthAdjust="spacingAndGlyphs"  xml:space="preserve">GOLD</text>
<text x="71.6" y="776.8" font-size="12" fill="#fff" textLength="82.4" lengthAdjust="spacingAndGlyphs"  xml:space="preserve">bbsqueeze(20)</text>
<text x="158.6" y="776.8" font-size="12" fill="#fff" textLength="41.1" lengthAdjust="spacingAndGlyphs"  xml:space="preserve">-0.5081</text>
<text x="205.5" y="776.8" font-size="12" fill="#fff" textLength="41.1" lengthAdjust="spacingAndGlyphs"  xml:space="preserve">-0.5081</text>
<text x="252.8" y="776.8" font-size="12" fill="#fff" textLength="37.5" lengthAdjust="spacingAndGlyphs"  xml:space="preserve">0.0000</text>
<g shape-rendering="crispEdges" fill="#fff">
<rect x="4" y="28" width="1" height="871" fill="#fff" />
<rect x="1854" y="28" width="1" height="871" fill="#fff" />
<rect x="4" y="28" width="1851" height="1" fill="#fff" />
<rect x="4" y="541" width="1851" height="1" fill="#fff" />
<rect x="4" y="543" width="1851" height="1" fill="#fff" />
<rect x="4" y="717" width="1851" height="1" fill="#fff" />
<rect x="4" y="719" width="1851" height="1" fill="#fff" />
<rect x="4" y="759" width="1851" height="1" fill="#fff" />
<rect x="4" y="761" width="1851" height="1" fill="#fff" />
<rect x="4" y="898" width="1851" height="1" fill="#fff" />
<rect x="5" y="542" width="1849" height="1" fill="#000" />
<rect x="5" y="718" width="1849" height="1" fill="#000" />
<rect x="5" y="760" width="1849" height="1" fill="#000" />
</g>
<line x1="285.5" x2="285.5" y1="545" y2="717" stroke="#fff" stroke-width="1" stroke-dasharray="3 3" shape-rendering="crispEdges"/>
<line x1="285.5" x2="285.5" y1="721" y2="759" stroke="#fff" stroke-width="1" stroke-dasharray="3 3" shape-rendering="crispEdges"/>
<line x1="285.5" x2="285.5" y1="763" y2="898" stroke="#fff" stroke-width="1" stroke-dasharray="3 3" shape-rendering="crispEdges"/>
<line x1="1021.5" x2="1021.5" y1="545" y2="717" stroke="#fff" stroke-width="1" stroke-dasharray="3 3" shape-rendering="crispEdges"/>
<line x1="1021.5" x2="1021.5" y1="721" y2="759" stroke="#fff" stroke-width="1" stroke-dasharray="3 3" shape-rendering="crispEdges"/>
<line x1="1021.5" x2="1021.5" y1="763" y2="898" stroke="#fff" stroke-width="1" stroke-dasharray="3 3" shape-rendering="crispEdges"/>
<line x1="1757.5" x2="1757.5" y1="545" y2="717" stroke="#fff" stroke-width="1" stroke-dasharray="3 3" shape-rendering="crispEdges"/>
<line x1="1757.5" x2="1757.5" y1="721" y2="759" stroke="#fff" stroke-width="1" stroke-dasharray="3 3" shape-rendering="crispEdges"/>
<line x1="1757.5" x2="1757.5" y1="763" y2="898" stroke="#fff" stroke-width="1" stroke-dasharray="3 3" shape-rendering="crispEdges"/>
<line x1="1855" x2="1858" y1="32.5" y2="32.5" stroke="#fff" stroke-width="1" shape-rendering="crispEdges"/>
<text x="1861.5" y="37.0" font-size="12.3" fill="#fff" textLength="44.5" lengthAdjust="spacingAndGlyphs"  xml:space="preserve">2487.00</text>
<line x1="1855" x2="1858" y1="81.5" y2="81.5" stroke="#fff" stroke-width="1" shape-rendering="crispEdges"/>
<text x="1861.5" y="86.0" font-size="12.3" fill="#fff" textLength="44.5" lengthAdjust="spacingAndGlyphs"  xml:space="preserve">2479.20</text>
<line x1="1855" x2="1858" y1="130.5" y2="130.5" stroke="#fff" stroke-width="1" shape-rendering="crispEdges"/>
<text x="1861.5" y="135.1" font-size="12.3" fill="#fff" textLength="44.5" lengthAdjust="spacingAndGlyphs"  xml:space="preserve">2471.40</text>
<line x1="1855" x2="1858" y1="180.5" y2="180.5" stroke="#fff" stroke-width="1" shape-rendering="crispEdges"/>
<text x="1861.5" y="184.1" font-size="12.3" fill="#fff" textLength="44.5" lengthAdjust="spacingAndGlyphs"  xml:space="preserve">2463.45</text>
<line x1="1855" x2="1858" y1="229.5" y2="229.5" stroke="#fff" stroke-width="1" shape-rendering="crispEdges"/>
<text x="1861.5" y="233.2" font-size="12.3" fill="#fff" textLength="44.5" lengthAdjust="spacingAndGlyphs"  xml:space="preserve">2455.65</text>
<line x1="1855" x2="1858" y1="278.5" y2="278.5" stroke="#fff" stroke-width="1" shape-rendering="crispEdges"/>
<text x="1861.5" y="282.2" font-size="12.3" fill="#fff" textLength="44.5" lengthAdjust="spacingAndGlyphs"  xml:space="preserve">2447.85</text>
<line x1="1855" x2="1858" y1="327.5" y2="327.5" stroke="#fff" stroke-width="1" shape-rendering="crispEdges"/>
<text x="1861.5" y="331.2" font-size="12.3" fill="#fff" textLength="44.5" lengthAdjust="spacingAndGlyphs"  xml:space="preserve">2440.05</text>
<line x1="1855" x2="1858" y1="376.5" y2="376.5" stroke="#fff" stroke-width="1" shape-rendering="crispEdges"/>
<text x="1861.5" y="380.3" font-size="12.3" fill="#fff" textLength="44.5" lengthAdjust="spacingAndGlyphs"  xml:space="preserve">2432.10</text>
<line x1="1855" x2="1858" y1="425.5" y2="425.5" stroke="#fff" stroke-width="1" shape-rendering="crispEdges"/>
<text x="1861.5" y="429.3" font-size="12.3" fill="#fff" textLength="44.5" lengthAdjust="spacingAndGlyphs"  xml:space="preserve">2424.30</text>
<line x1="1855" x2="1858" y1="474.5" y2="474.5" stroke="#fff" stroke-width="1" shape-rendering="crispEdges"/>
<text x="1861.5" y="478.4" font-size="12.3" fill="#fff" textLength="44.5" lengthAdjust="spacingAndGlyphs"  xml:space="preserve">2416.50</text>
<line x1="1855" x2="1858" y1="523.5" y2="523.5" stroke="#fff" stroke-width="1" shape-rendering="crispEdges"/>
<text x="1861.5" y="527.4" font-size="12.3" fill="#fff" textLength="44.5" lengthAdjust="spacingAndGlyphs"  xml:space="preserve">2408.70</text>
<rect x="1856" y="522" width="56" height="14" fill="#fff" />
<text x="1861.3" y="534" font-size="12.3" fill="#000" textLength="45.2" lengthAdjust="spacingAndGlyphs"  xml:space="preserve">2407.60</text>
<line x1="1855" x2="1857" y1="529.5" y2="529.5" stroke="#000" stroke-width="1" shape-rendering="crispEdges"/>
<text x="1858" y="557.1" font-size="12.3" fill="#fff" textLength="31" lengthAdjust="spacingAndGlyphs"  xml:space="preserve">2.916</text>
<line x1="1855" x2="1857" y1="545.5" y2="545.5" stroke="#fff" stroke-width="1" shape-rendering="crispEdges"/>
<line x1="1855" x2="1858" y1="594.5" y2="594.5" stroke="#fff" stroke-width="1" shape-rendering="crispEdges"/>
<text x="1858" y="598.1" font-size="12.3" fill="#fff" textLength="24.5" lengthAdjust="spacingAndGlyphs"  xml:space="preserve">0.00</text>
<text x="1858" y="713.6" font-size="12.3" fill="#fff" textLength="35" lengthAdjust="spacingAndGlyphs"  xml:space="preserve">-7.391</text>
<text x="1858" y="733.3" font-size="12.3" fill="#fff"  xml:space="preserve">3</text>
<text x="1858" y="744.4" font-size="12.3" fill="#fff" textLength="24.5" lengthAdjust="spacingAndGlyphs"  xml:space="preserve">0.00</text>
<text x="1858" y="756.5" font-size="12.3" fill="#fff"  xml:space="preserve">-3</text>
<text x="1858" y="775.4" font-size="12.3" fill="#fff" textLength="38" lengthAdjust="spacingAndGlyphs"  xml:space="preserve">0.6143</text>
<line x1="1855" x2="1858" y1="802.5" y2="802.5" stroke="#fff" stroke-width="1" shape-rendering="crispEdges"/>
<text x="1858" y="806.1" font-size="12.3" fill="#fff" textLength="24.5" lengthAdjust="spacingAndGlyphs"  xml:space="preserve">0.00</text>
<text x="1858" y="894.6" font-size="12.3" fill="#fff" textLength="42" lengthAdjust="spacingAndGlyphs"  xml:space="preserve">-1.5193</text>
<line x1="5.5" x2="5.5" y1="899" y2="903" stroke="#fff" stroke-width="1" shape-rendering="crispEdges"/>
<text x="4.4" y="913.8" font-size="12.3" fill="#fff" textLength="62.7" lengthAdjust="spacingAndGlyphs"  xml:space="preserve">17 Jul 2024</text>
<line x1="101.5" x2="101.5" y1="899" y2="903" stroke="#fff" stroke-width="1" shape-rendering="crispEdges"/>
<text x="100.4" y="913.8" font-size="12.3" fill="#fff" textLength="67" lengthAdjust="spacingAndGlyphs"  xml:space="preserve">17 Jul 18:15</text>
<line x1="197.5" x2="197.5" y1="899" y2="903" stroke="#fff" stroke-width="1" shape-rendering="crispEdges"/>
<text x="196.4" y="913.8" font-size="12.3" fill="#fff" textLength="67" lengthAdjust="spacingAndGlyphs"  xml:space="preserve">17 Jul 21:15</text>
<line x1="293.5" x2="293.5" y1="899" y2="903" stroke="#fff" stroke-width="1" shape-rendering="crispEdges"/>
<text x="292.4" y="913.8" font-size="12.3" fill="#fff" textLength="67" lengthAdjust="spacingAndGlyphs"  xml:space="preserve">18 Jul 01:15</text>
<line x1="389.5" x2="389.5" y1="899" y2="903" stroke="#fff" stroke-width="1" shape-rendering="crispEdges"/>
<text x="388.4" y="913.8" font-size="12.3" fill="#fff" textLength="67" lengthAdjust="spacingAndGlyphs"  xml:space="preserve">18 Jul 04:15</text>
<line x1="485.5" x2="485.5" y1="899" y2="903" stroke="#fff" stroke-width="1" shape-rendering="crispEdges"/>
<text x="484.4" y="913.8" font-size="12.3" fill="#fff" textLength="67" lengthAdjust="spacingAndGlyphs"  xml:space="preserve">18 Jul 07:15</text>
<line x1="581.5" x2="581.5" y1="899" y2="903" stroke="#fff" stroke-width="1" shape-rendering="crispEdges"/>
<text x="580.4" y="913.8" font-size="12.3" fill="#fff" textLength="67" lengthAdjust="spacingAndGlyphs"  xml:space="preserve">18 Jul 10:15</text>
<line x1="677.5" x2="677.5" y1="899" y2="903" stroke="#fff" stroke-width="1" shape-rendering="crispEdges"/>
<text x="676.4" y="913.8" font-size="12.3" fill="#fff" textLength="67" lengthAdjust="spacingAndGlyphs"  xml:space="preserve">18 Jul 13:15</text>
<line x1="773.5" x2="773.5" y1="899" y2="903" stroke="#fff" stroke-width="1" shape-rendering="crispEdges"/>
<text x="772.4" y="913.8" font-size="12.3" fill="#fff" textLength="67" lengthAdjust="spacingAndGlyphs"  xml:space="preserve">18 Jul 16:15</text>
<line x1="869.5" x2="869.5" y1="899" y2="903" stroke="#fff" stroke-width="1" shape-rendering="crispEdges"/>
<text x="868.4" y="913.8" font-size="12.3" fill="#fff" textLength="67" lengthAdjust="spacingAndGlyphs"  xml:space="preserve">18 Jul 19:15</text>
<line x1="965.5" x2="965.5" y1="899" y2="903" stroke="#fff" stroke-width="1" shape-rendering="crispEdges"/>
<text x="964.4" y="913.8" font-size="12.3" fill="#fff" textLength="67" lengthAdjust="spacingAndGlyphs"  xml:space="preserve">18 Jul 22:15</text>
<line x1="1061.5" x2="1061.5" y1="899" y2="903" stroke="#fff" stroke-width="1" shape-rendering="crispEdges"/>
<text x="1060.4" y="913.8" font-size="12.3" fill="#fff" textLength="67" lengthAdjust="spacingAndGlyphs"  xml:space="preserve">19 Jul 02:15</text>
<line x1="1157.5" x2="1157.5" y1="899" y2="903" stroke="#fff" stroke-width="1" shape-rendering="crispEdges"/>
<text x="1156.4" y="913.8" font-size="12.3" fill="#fff" textLength="67" lengthAdjust="spacingAndGlyphs"  xml:space="preserve">19 Jul 05:15</text>
<line x1="1253.5" x2="1253.5" y1="899" y2="903" stroke="#fff" stroke-width="1" shape-rendering="crispEdges"/>
<text x="1252.4" y="913.8" font-size="12.3" fill="#fff" textLength="67" lengthAdjust="spacingAndGlyphs"  xml:space="preserve">19 Jul 08:15</text>
<line x1="1349.5" x2="1349.5" y1="899" y2="903" stroke="#fff" stroke-width="1" shape-rendering="crispEdges"/>
<text x="1348.4" y="913.8" font-size="12.3" fill="#fff" textLength="67" lengthAdjust="spacingAndGlyphs"  xml:space="preserve">19 Jul 11:15</text>
<line x1="1445.5" x2="1445.5" y1="899" y2="903" stroke="#fff" stroke-width="1" shape-rendering="crispEdges"/>
<text x="1444.4" y="913.8" font-size="12.3" fill="#fff" textLength="67" lengthAdjust="spacingAndGlyphs"  xml:space="preserve">19 Jul 14:15</text>
</svg></body></html>
